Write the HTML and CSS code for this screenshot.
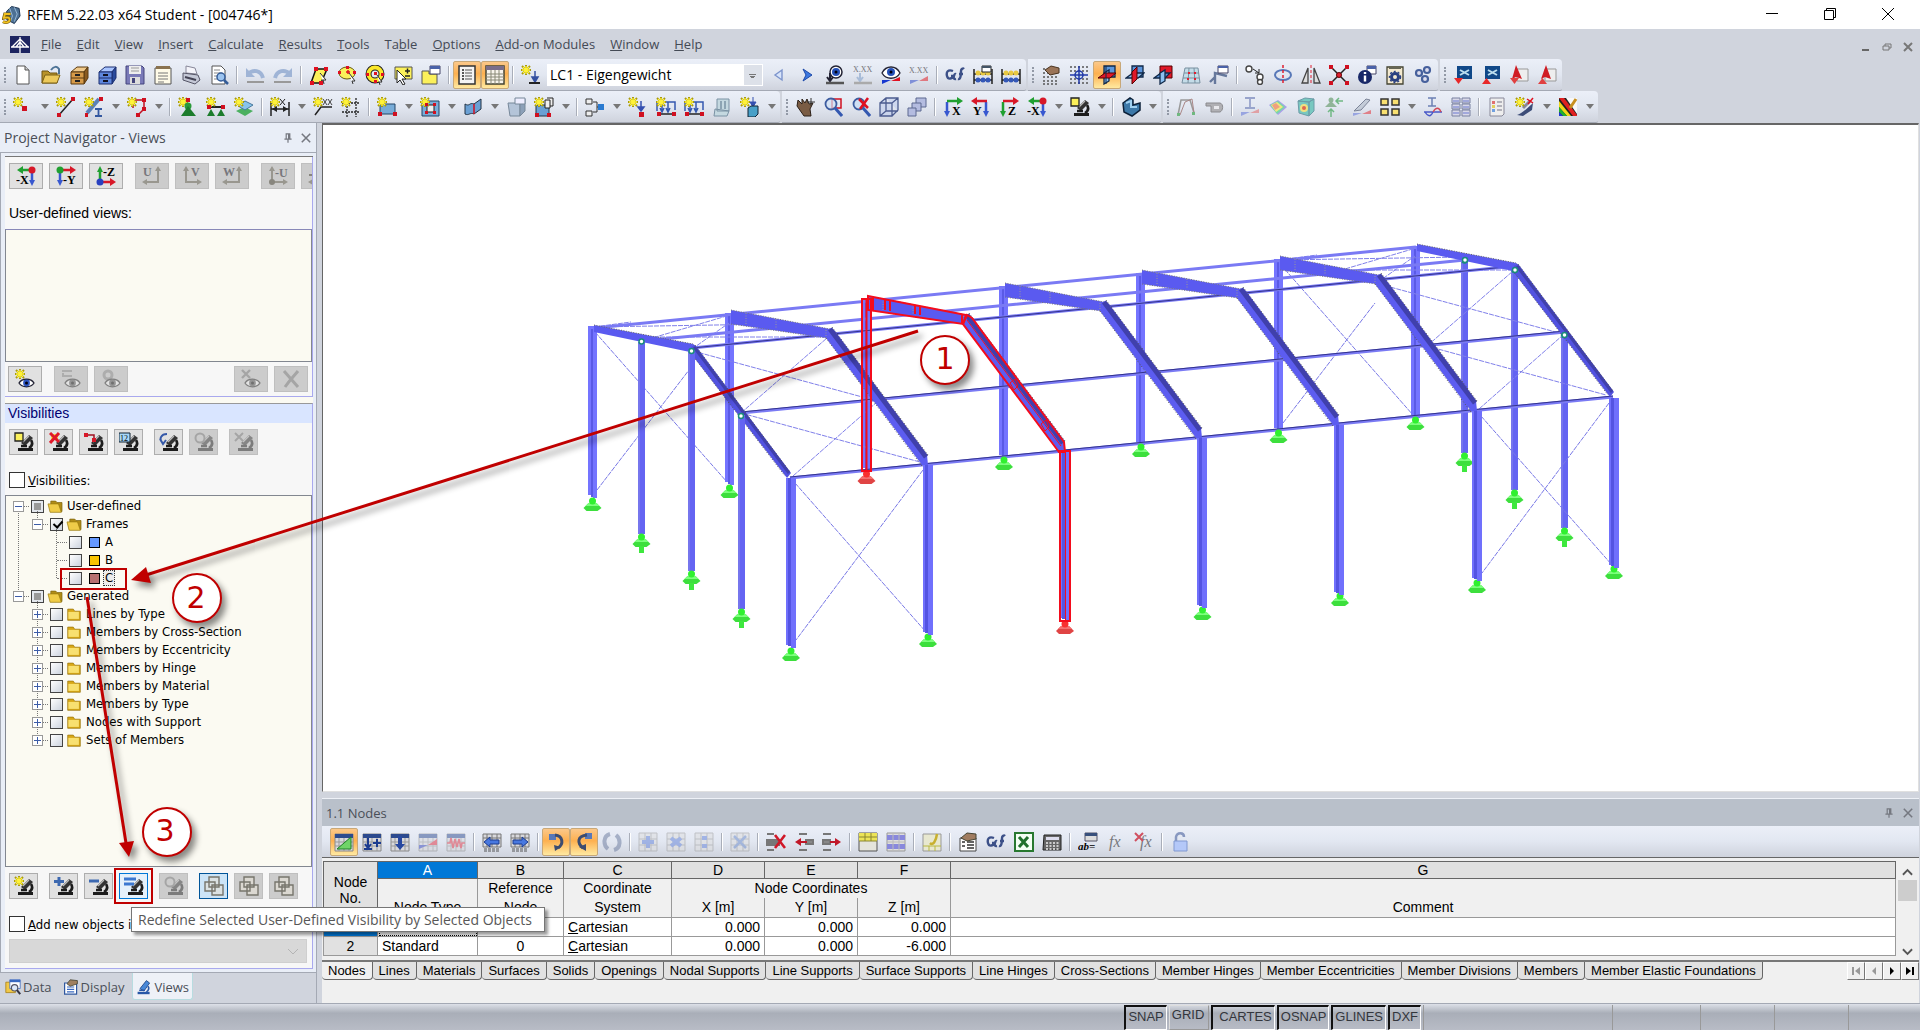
FILE: index.html
```html
<!DOCTYPE html>
<html lang="en">
<head>
    <meta charset="UTF-8">
    <meta name="viewport" content="width=device-width, initial-scale=1.0">
    <title>RFEM 5.22.03 x64 Student - [004746*]</title>
    <link rel="stylesheet" href="styles.css">
</head>
<body>
    <!-- Icon library -->
    <svg class="sprite" aria-hidden="true">
        <!-- shared pieces -->
        <symbol id="star" viewBox="0 0 20 20"><path d="M5 0v10M0 5h10M1 1l8 8M9 1l-8 8" stroke="#a89a10" stroke-width="2"/><path d="M5 1v8M1 5h8M2 2l6 6M8 2l-6 6" stroke="#fff23a" stroke-width="1.4"/></symbol>
        <symbol id="scope" viewBox="0 0 20 20"><path d="M4 16h15v3H4z" fill="#1c1c1c"/><path d="M7 11l8-8 4 3-8 8z" fill="#333"/><path d="M9 10l6-6" stroke="#bbb" stroke-width="1.2"/><path d="M17 8c2 3 1 6-2 8M7 14h6" stroke="#1c1c1c" stroke-width="2.6" fill="none"/></symbol>
        <symbol id="eye" viewBox="0 0 20 20"><path d="M4 14c3-5 12-5 15 0-3 5-12 5-15 0z" fill="#fff" stroke="#223" stroke-width="1.3"/><circle cx="11.500" cy="14" r="3.400" fill="#2d55c0"/><circle cx="11.500" cy="14" r="1.500" fill="#001"/></symbol>
        <symbol id="grid" viewBox="0 0 20 20"><path d="M1 2h18v17H1z" fill="#d8d8dc" stroke="#888"/><path d="M1 2h18v4H1z" fill="#2c4a8e"/><path d="M1 10h18M1 14h18M5 6v13M10 6v13M15 6v13" stroke="#999"/></symbol>
        <!-- standard toolbar -->
        <symbol id="new" viewBox="0 0 20 20"><path d="M4 1h8l4 4v14H4z" fill="#fff" stroke="#555"/><path d="M12 1v4h4" fill="#ccc" stroke="#555"/></symbol>
        <symbol id="open" viewBox="0 0 20 20"><path d="M1 6h6l2 2h7v10H1z" fill="#b8932a" stroke="#6f5510"/><path d="M1 18l3-8h15l-3 8z" fill="#ecc95a" stroke="#7b6015"/><path d="M10 5c3-4 6-4 8-1v5" fill="none" stroke="#4d7396" stroke-width="2"/></symbol>
        <symbol id="cab" viewBox="0 0 20 20"><path d="M2 7l6-5h11l-4 5z" fill="#f0c98a" stroke="#5a3a10"/><path d="M15 7l4-5v11l-4 6z" fill="#8a5a20" stroke="#5a3a10"/><path d="M2 7h13v12H2zM2 13h13" fill="#d69a48" stroke="#5a3a10"/><path d="M6 10h5M6 16h5" stroke="#222" stroke-width="2"/></symbol>
        <symbol id="cabblue" viewBox="0 0 20 20"><path d="M2 7l6-5h11l-4 5z" fill="#a8c4ff" stroke="#1c2f70"/><path d="M15 7l4-5v11l-4 6z" fill="#2a4a9c" stroke="#1c2f70"/><path d="M2 7h13v12H2zM2 13h13" fill="#5e86dc" stroke="#1c2f70"/><path d="M6 10h5M6 16h5" stroke="#112" stroke-width="2"/></symbol>
        <symbol id="save" viewBox="0 0 20 20"><path d="M1 1h16l2 2v16H1z" fill="#7a7ab8" stroke="#44447c"/><path d="M4 1h12v8H4z" fill="#eee"/><path d="M6 3h8M6 6h8" stroke="#999"/><path d="M5 12h10v7H5z" fill="#ddd"/><path d="M7 13h3v5H7z" fill="#44447c"/></symbol>
        <symbol id="clip" viewBox="0 0 20 20"><path d="M2 3h16v16H2z" fill="#fffbe8" stroke="#555"/><path d="M3 1h14v3H3z" fill="#8a7350"/><path d="M5 8h10M5 11h10M5 14h10M5 17h6" stroke="#777"/></symbol>
        <symbol id="print" viewBox="0 0 20 20"><path d="M5 1l9 2 2 6-11-1z" fill="#f4f4fa" stroke="#889"/><path d="M2 8l15 2 2 5-5 4-12-4z" fill="#c4c8d6" stroke="#556"/><path d="M4 12l11 3" stroke="#445" stroke-width="2"/></symbol>
        <symbol id="preview" viewBox="0 0 20 20"><path d="M3 1h9l4 4v14H3z" fill="#fff" stroke="#555"/><path d="M5 5h6M5 8h8M5 11h5M5 14h4" stroke="#888"/><circle cx="12" cy="12" r="4" fill="#9cc4f0" stroke="#345c98" stroke-width="1.500"/><path d="M15 15l4 4" stroke="#345c98" stroke-width="2.500"/></symbol>
        <symbol id="undo" viewBox="0 0 20 20"><path d="M3 9c5-5 13-4 15 4" fill="none" stroke="#9fb4d6" stroke-width="4"/><path d="M1 3v9h9z" fill="#9fb4d6"/><path d="M2 17h17" stroke="#999" stroke-width="2"/></symbol>
        <symbol id="redo" viewBox="0 0 20 20"><path d="M17 9c-5-5-13-4-15 4" fill="none" stroke="#9fb4d6" stroke-width="4"/><path d="M19 3v9h-9z" fill="#9fb4d6"/><path d="M1 17h17" stroke="#999" stroke-width="2"/></symbol>
        <symbol id="selpar" viewBox="0 0 20 20"><path d="M2 18L7 4h11l-6 14z" fill="#fbf05a" stroke="#111" stroke-width="1.500"/><path d="M1 16h4v4H1zM5 2h4v4H5zM15 2h4v4h-4zM10 16h4v4h-4z" fill="#e01020"/><path d="M11 8l6 7-3 0 1 4" fill="#fff" stroke="#333"/></symbol>
        <symbol id="selell" viewBox="0 0 20 20"><ellipse cx="10" cy="8" rx="8" ry="6" fill="#fbf05a" stroke="#665c10"/><path d="M1 6h3v3H1zM16 6h3v3h-3zM9 1h3v3H9z" fill="#e01020"/><path d="M9 7h4M11 5v4" stroke="#e01020" stroke-width="1.500"/><path d="M12 8l6 8h-3l1 3" fill="#fff" stroke="#333"/></symbol>
        <symbol id="selring" viewBox="0 0 20 20"><circle cx="10" cy="9" r="6.500" fill="none" stroke="#222" stroke-width="6"/><circle cx="10" cy="9" r="6.500" fill="none" stroke="#fbe72a" stroke-width="4"/><path d="M1 8h3v3H1zM16 8h3v3h-3zM9 15h3v3H9zM9 7h3v3H9z" fill="#e01020"/><path d="M12 10l5 7h-3l1 3" fill="#fff" stroke="#333"/></symbol>
        <symbol id="selplus" viewBox="0 0 20 20"><path d="M2 2h17v12H2z" fill="#fbf05a" stroke="#555"/><path d="M12 6h5M14.500 3.500v5M12 11h5" stroke="#222" stroke-width="1.500"/><path d="M4 5v13l3-3 3 5 2-1-3-5h4z" fill="#fff" stroke="#222"/></symbol>
        <symbol id="selwin" viewBox="0 0 20 20"><path d="M1 6h7v3h8v10H1z" fill="#fbf05a" stroke="#555"/><path d="M9 1h10v8H9z" fill="#fff" stroke="#446"/><path d="M9 1h10v3H9z" fill="#4a62a8"/></symbol>
        <symbol id="navi" viewBox="0 0 20 20"><path d="M2 1h16v18H2z" fill="#f4f4f4" stroke="#333" stroke-width="1.500"/><path d="M5 5h2M5 8h2M5 11h2M5 14h2" stroke="#222" stroke-width="1.500"/><path d="M8 5h7M8 8h7M8 11h7M8 14h7" stroke="#555"/></symbol>
        <symbol id="tab" viewBox="0 0 20 20"><path d="M1 1h18v18H1z" fill="#f8f4ec" stroke="#443" stroke-width="1.500"/><path d="M1 1h18v4H1z" fill="#7a6e8a"/><path d="M1 9h18M1 12h18M1 15h18M6 5v14M10 5v14M14 5v14" stroke="#887"/></symbol>
        <symbol id="loadnew" viewBox="0 0 20 20"><use href="#star"/><path d="M14 6v9M11 12l3 5 3-5z" stroke="#3450a0" stroke-width="1.500" fill="#3450a0"/><path d="M8 18h11" stroke="#222" stroke-width="2"/></symbol>
        <symbol id="prev" viewBox="0 0 20 20"><path d="M13 5v10L6 10z" fill="#d8e4fa" stroke="#7c94cc" stroke-width="1.400"/></symbol>
        <symbol id="next" viewBox="0 0 20 20"><path d="M6 4l9 6-9 6 3-6z" fill="#3c78e0" stroke="#1c48a8"/></symbol>
        <symbol id="loadeye" viewBox="0 0 20 20"><circle cx="11" cy="7" r="6" fill="#fff" stroke="#223" stroke-width="1.500"/><circle cx="11" cy="7" r="4" fill="#2450b8"/><circle cx="11" cy="7" r="1.500" fill="#001"/><path d="M5 8v8M2 12l3 4 3-4" stroke="#223" stroke-width="2" fill="none"/><path d="M1 18h18" stroke="#555" stroke-width="2.500"/></symbol>
        <symbol id="loadxx" viewBox="0 0 20 20"><text x="0" y="7" class="tiny gray">X.XX</text><path d="M7 8v8M4 12l3 4 3-4" stroke="#a8bcd8" stroke-width="2" fill="none"/><path d="M1 18h18" stroke="#aaa" stroke-width="2.500"/></symbol>
        <symbol id="reseye" viewBox="0 0 20 20"><path d="M1 8c4-8 14-8 18 0-4 7-14 7-18 0z" fill="#fff" stroke="#223" stroke-width="1.300"/><circle cx="10" cy="7" r="4" fill="#2450b8"/><circle cx="10" cy="7" r="1.500" fill="#001"/><path d="M1 19v-4l9 0z" fill="#1838d0"/><path d="M19 12v4l-9 0z" fill="#e01020"/></symbol>
        <symbol id="resxx" viewBox="0 0 20 20"><text x="0" y="8" class="tiny gray">X.XX</text><path d="M1 19v-4l9 0z" fill="#8090d8"/><path d="M19 11v5l-9 0z" fill="#e07880"/></symbol>
        <symbol id="calc" viewBox="0 0 20 20"><path d="M8 6c-5-2-7 1-6 5s5 3 6 0H6M11 9c-2-1-4 6 0 5M13 14c3 1 3-6 3-8s2-3 3-2M14 9h4" fill="none" stroke="#3c5088" stroke-width="2.400"/></symbol>
        <symbol id="abacus" viewBox="0 0 20 20"><path d="M1 4v15M19 4v15M1 9h18M1 15h18" fill="none" stroke="#222" stroke-width="1.500"/><circle cx="5" cy="8" r="2.500" fill="#e8c840"/><circle cx="10" cy="8" r="2.500" fill="#e8c840"/><circle cx="15" cy="8" r="2.500" fill="#e8c840"/><circle cx="5" cy="15" r="2.500" fill="#3458b8"/><circle cx="10" cy="15" r="2.500" fill="#3458b8"/><circle cx="15" cy="15" r="2.500" fill="#3458b8"/></symbol>
        <symbol id="abacus2" viewBox="0 0 20 20"><use href="#abacus"/><path d="M9 1h9v6H9z" fill="#fff" stroke="#222"/><path d="M9 1h9v2H9z" fill="#456"/></symbol>
        <symbol id="handgrid" viewBox="0 0 20 20"><path d="M2 4h16M2 8h16M2 12h16M2 16h16M2 19h16" stroke="#555" stroke-dasharray="2 2" stroke-width="1.500"/><path d="M4 5l6-4 8 2v5l-9 2z" fill="#9a7458" stroke="#4a3420"/></symbol>
        <symbol id="snap" viewBox="0 0 20 20"><path d="M1 2h18M1 6h18M1 14h18M1 18h18" stroke="#555" stroke-dasharray="2 2" stroke-width="1.500"/><circle cx="10" cy="10" r="4" fill="#cde" stroke="#2038a8" stroke-width="1.500"/><path d="M10 1v18M1 10h18" stroke="#2038a8" stroke-width="1.500"/></symbol>
        <symbol id="wp1" viewBox="0 0 20 20"><path d="M7 1h11v11H7z" fill="#5c96dc" stroke="#102848" stroke-width="1.300"/><path d="M7 8l5-3v11l-5 3z" fill="#8cc0f0" stroke="#102848" stroke-width="1.300"/><path d="M1 13l7-5h11l-6 5z" fill="#e01828" stroke="#500"/><path d="M9 1v18" stroke="#102848"/></symbol>
        <symbol id="wp2" viewBox="0 0 20 20"><path d="M7 1h11v11H7z" fill="#5c96dc" stroke="#102848" stroke-width="1.300"/><path d="M1 13l7-5h11l-6 5z" fill="#8cc0f0" stroke="#102848" stroke-width="1.300"/><path d="M7 7l5-5v12l-5 5z" fill="#e01828" stroke="#500"/></symbol>
        <symbol id="wp3" viewBox="0 0 20 20"><path d="M7 1h12v12H7z" fill="#e01828" stroke="#500"/><path d="M1 13l7-5h9l-5 5z" fill="#5c96dc" stroke="#102848" stroke-width="1.300"/><path d="M7 8l5-3v11l-5 3z" fill="#8cc0f0" stroke="#102848" stroke-width="1.300"/></symbol>
        <symbol id="gridtilt" viewBox="0 0 20 20"><path d="M4 3h13l2 15H1zM3 8h15M2 13h16M8 3L7 18M13 3l1 15" fill="#c4dce8" stroke="#7890a0"/><path d="M7 7h2v2H7zM13 7h2v2h-2zM6 13h2v2H6zM13 13h2v2h-2z" fill="#e02030"/></symbol>
        <symbol id="origin" viewBox="0 0 20 20"><path d="M6 19V8l12 3M6 12l-5 5" stroke="#66789c" stroke-width="2.400" fill="none"/><path d="M9 1h10v7H9z" fill="#fff" stroke="#446"/><path d="M9 1h10v2H9z" fill="#4a62a8"/></symbol>
        <symbol id="move" viewBox="0 0 20 20"><g fill="#fff" stroke="#444" stroke-width="1.400"><circle cx="4" cy="4" r="3"/><circle cx="15" cy="12" r="3"/><circle cx="15" cy="17" r="2.500"/></g><path d="M8 4l6 4M14 4v4h-4" stroke="#222" fill="none"/></symbol>
        <symbol id="rotate" viewBox="0 0 20 20"><ellipse cx="10" cy="10" rx="8" ry="5" fill="none" stroke="#5878b8" stroke-width="2"/><path d="M10 0v20" stroke="#e02030" stroke-dasharray="3 2" stroke-width="1.500"/></symbol>
        <symbol id="mirror" viewBox="0 0 20 20"><path d="M7 3v15H1zM13 3v15h6z" fill="#ddd" stroke="#444" stroke-width="1.300"/><path d="M10 0v20" stroke="#e02030" stroke-dasharray="3 2"/></symbol>
        <symbol id="cross" viewBox="0 0 20 20"><path d="M2 2l16 16M18 2L2 18" stroke="#222" stroke-width="1.500"/><path d="M0 0h4v4H0zM16 0h4v4h-4zM0 16h4v4H0zM16 16h4v4h-4z" fill="#d01020"/><circle cx="10" cy="10" r="2.500" fill="#e02030" stroke="#600"/></symbol>
        <symbol id="info" viewBox="0 0 20 20"><path d="M10 1h9v8h-9z" fill="#fff" stroke="#446"/><path d="M10 1h9v3h-9z" fill="#4a62a8"/><circle cx="8" cy="12" r="7" fill="#182868"/><path d="M8 7v2M8 10.500v6" stroke="#fff" stroke-width="2.400"/></symbol>
        <symbol id="pageset" viewBox="0 0 20 20"><path d="M2 2h16v17H2z" fill="#f4ead0" stroke="#443" stroke-width="1.300"/><path d="M4 1h12v3H4z" fill="#665"/><circle cx="10" cy="12" r="3.500" fill="none" stroke="#2a4080" stroke-width="3"/><circle cx="10" cy="12" r="5.500" fill="none" stroke="#2a4080" stroke-width="1.500" stroke-dasharray="2 2"/></symbol>
        <symbol id="gears" viewBox="0 0 20 20"><g fill="#dde" stroke="#46609c" stroke-width="2.200"><circle cx="6" cy="8" r="3"/><circle cx="14" cy="5" r="3"/><circle cx="12" cy="14" r="3"/></g></symbol>
        <symbol id="impblue" viewBox="0 0 20 20"><path d="M4 1h15v13H4z" fill="#104888"/><path d="M7 5l9 5M16 5l-9 5" stroke="#bde" stroke-width="2"/><path d="M1 13h9l-4.500 6z" fill="#e82828"/></symbol>
        <symbol id="expblue" viewBox="0 0 20 20"><path d="M4 1h15v13H4z" fill="#104888"/><path d="M7 5l9 5M16 5l-9 5" stroke="#bde" stroke-width="2"/><path d="M1 19h9l-4.500-6z" fill="#e82828"/></symbol>
        <symbol id="impred" viewBox="0 0 20 20"><path d="M8 4h11v12H8z" fill="#eee" stroke="#999"/><path d="M7 0l6 14-6-2-4 2z" fill="#d01c24"/><path d="M1 13h9l-4.500 6z" fill="#e04040"/></symbol>
        <symbol id="expred" viewBox="0 0 20 20"><path d="M8 4h11v12H8z" fill="#eee" stroke="#999"/><path d="M9 0l5 14-6-2-4 2z" fill="#d01c24"/><path d="M1 19h9l-4.500-6z" fill="#e04040"/></symbol>
        <!-- modelling toolbar -->
        <symbol id="node" viewBox="0 0 20 20"><use href="#star"/><path d="M9 9h5v5H9z" fill="#d01020"/></symbol>
        <symbol id="line" viewBox="0 0 20 20"><use href="#star"/><path d="M3 18L17 2" stroke="#222" stroke-width="1.500"/><path d="M1 16h4v4H1zM15 0h4v4h-4z" fill="#d01020"/></symbol>
        <symbol id="member" viewBox="0 0 20 20"><path d="M3 16L15 2" stroke="#5a80b8" stroke-width="4"/><use href="#star"/><path d="M1 16h3v4H1zM15 0h4v4h-4z" fill="#d01020"/><path d="M11 12h7M11 19h7M14.500 12v7" stroke="#3458a0" stroke-width="1.800"/></symbol>
        <symbol id="poly" viewBox="0 0 20 20"><path d="M6 11V3h11v9l-6 6" stroke="#c01020" fill="none" stroke-width="1.500"/><use href="#star"/><path d="M15 1h4v4h-4zM15 10h4v4h-4zM9 16h4v4H9z" fill="#d01020"/></symbol>
        <symbol id="support" viewBox="0 0 20 20"><use href="#star"/><path d="M8 1h4v4H8z" fill="#d01020"/><circle cx="10" cy="9" r="3.500" fill="#2a9a3a"/><path d="M10 9l8 10H3z" fill="#1c7c2c"/></symbol>
        <symbol id="linesup" viewBox="0 0 20 20"><path d="M2 10h16" stroke="#222" stroke-width="2"/><use href="#star"/><path d="M1 8h4v4H1zM15 8h4v4h-4z" fill="#d01020"/><path d="M5 12l4 7H1zM15 12l4 7h-8z" fill="#1c7c2c"/></symbol>
        <symbol id="surfsup" viewBox="0 0 20 20"><path d="M2 14l8-4 9 4-8 5z" fill="#4cb060"/><path d="M4 9l7-5 8 4-8 5z" fill="#88c4ec" stroke="#48789c"/><use href="#star"/></symbol>
        <symbol id="dim" viewBox="0 0 20 20"><path d="M1 5v14M19 5v14M1 12h18" stroke="#222" stroke-width="1.500"/><path d="M2 12l5-3v6zM18 12l-5-3v6z" fill="#222"/><use href="#star"/><path d="M10 2l5 6M15 2l-5 6" stroke="#222"/></symbol>
        <symbol id="dimxx" viewBox="0 0 20 20"><path d="M2 18l6-8h11" fill="none" stroke="#222" stroke-width="1.500"/><use href="#star"/><path d="M10 2l4 6M14 2l-4 6M15 2l4 6M19 2l-4 6" stroke="#444"/></symbol>
        <symbol id="guide" viewBox="0 0 20 20"><path d="M6 3v17M15 1v19M1 6h18M1 15h18" stroke="#222" stroke-dasharray="2 1" stroke-width="1.300"/><use href="#star"/></symbol>
        <symbol id="surf" viewBox="0 0 20 20"><path d="M3 7h15v10H3z" fill="#78acd8" stroke="#246"/><use href="#star"/><path d="M1 15h4v4H1zM16 15h4v4h-4z" fill="#d01020"/></symbol>
        <symbol id="opening" viewBox="0 0 20 20"><path d="M2 4h17v15H2z" fill="#78acd8" stroke="#246"/><path d="M7 8h7v7H7z" fill="#eee" stroke="#222"/><use href="#star"/><path d="M5 6h3v3H5zM13 6h3v3h-3zM5 14h3v3H5zM13 14h3v3h-3z" fill="#d01020"/></symbol>
        <symbol id="curved" viewBox="0 0 20 20"><path d="M2 7c5 3 4-2 9 0l7-5v10l-7 5c-4-2-5 2-9 0z" fill="#6aa0d4" stroke="#234"/><path d="M11 7v10" stroke="#d01020" stroke-width="1.500"/></symbol>
        <symbol id="solid" viewBox="0 0 20 20"><path d="M2 6h12v13H4z" fill="#b4c4d8" stroke="#789"/><path d="M14 6l5-4v12l-5 5z" fill="#8ca0b8" stroke="#789"/><path d="M9 1h10v6H9z" fill="#eef" stroke="#789"/></symbol>
        <symbol id="solid2" viewBox="0 0 20 20"><path d="M2 8h13v11H2z" fill="#6aa0d4" stroke="#234"/><path d="M11 3h5v8h-5zM13 1h6v8h-3" fill="#eee" stroke="#222"/><use href="#star"/><path d="M1 16h4v4H1zM13 16h4v4h-4z" fill="#d01020"/></symbol>
        <symbol id="hinge" viewBox="0 0 20 20"><path d="M1 2h6v5H1zM1 14h6v5H1z" fill="#eee" stroke="#333"/><path d="M8 5h4v10H8M12 10h3" stroke="#333" fill="none"/><path d="M13 7h6v6h-6z" fill="#2a7ad0"/></symbol>
        <symbol id="nload" viewBox="0 0 20 20"><use href="#star"/><path d="M13 4v8M10 10l3 4 3-4z" stroke="#3450b0" fill="#3450b0" stroke-width="1.500"/><path d="M11 15h5v5h-5z" fill="#d01020"/></symbol>
        <symbol id="mload" viewBox="0 0 20 20"><path d="M1 5h18v8M6 5v9M12 5v9M1 5v9M4 11l2 4 2-4M10 11l2 4 2-4" stroke="#3458b0" fill="none" stroke-width="1.500"/><path d="M1 17h18" stroke="#222" stroke-width="1.500"/><use href="#star"/><path d="M1 15h4v4H1zM16 15h4v4h-4z" fill="#d01020"/></symbol>
        <symbol id="sload" viewBox="0 0 20 20"><path d="M5 2h12v12H5zM3 12l14 2-2 5H2z" fill="#c4d8e0" stroke="#7a92a4"/><path d="M9 4v8M13 4v8" stroke="#7a92a4" stroke-width="1.500"/></symbol>
        <symbol id="vload" viewBox="0 0 20 20"><use href="#star"/><path d="M13 0v7M10 5l3 5 3-5z" stroke="#3450b0" fill="#3450b0"/><path d="M8 11l3-2h7v8l-3 3H8z" fill="#48a0c8" stroke="#123"/></symbol>
        <!-- view toolbar -->
        <symbol id="pan" viewBox="0 0 20 20"><path d="M3 3l4 4V2l3 4 2-4 2 5 4-1-3 6 1 7H9L2 9z" fill="#7a5c44" stroke="#2c2018"/><path d="M16 1v8M12 5h8" stroke="#333"/></symbol>
        <symbol id="zoomwin" viewBox="0 0 20 20"><path d="M9 2h9v9H9z" fill="none" stroke="#d01020" stroke-width="1.500"/><circle cx="8" cy="7" r="5.500" fill="#cfe0f4" fill-opacity=".7" stroke="#3c5ca0" stroke-width="1.800"/><path d="M12 11l7 8" stroke="#3458b0" stroke-width="3"/></symbol>
        <symbol id="zoomoff" viewBox="0 0 20 20"><circle cx="8" cy="7" r="5.500" fill="#cfe0f4" stroke="#3c5ca0" stroke-width="1.800"/><path d="M12 11l7 8" stroke="#3458b0" stroke-width="3"/><path d="M8 2l9 9M17 1L9 12" stroke="#e01020" stroke-width="2.500"/></symbol>
        <symbol id="cube" viewBox="0 0 20 20"><path d="M1 6h12v13H1zM1 6l6-5h12v12l-6 6M13 6l6-5M7 1v13h12M7 14l-6 5" fill="#c4d0ec" fill-opacity=".7" stroke="#4c5c90" stroke-width="1.300"/></symbol>
        <symbol id="cubes" viewBox="0 0 20 20"><g fill="#b4bce0" stroke="#5c6890"><path d="M9 1h10v9H9z"/><path d="M5 6h9v8H5z"/><path d="M1 11h8v8H1z"/></g></symbol>
        <symbol id="vx" viewBox="0 0 20 20"><path d="M4 5v11" stroke="#3858d0" stroke-width="2.500"/><path d="M1 14h6l-3 6z" fill="#3858d0"/><path d="M4 4h12" stroke="#20a030" stroke-width="2.500"/><path d="M14 0v8l6-4z" fill="#20a030"/><text x="9" y="18" class="axis">X</text></symbol>
        <symbol id="vy" viewBox="0 0 20 20"><path d="M15 5v11" stroke="#3858d0" stroke-width="2.500"/><path d="M12 14h6l-3 6z" fill="#3858d0"/><path d="M4 4h12" stroke="#d81828" stroke-width="2.500"/><path d="M6 0v8L0 4z" fill="#d81828"/><text x="2" y="18" class="axis">Y</text></symbol>
        <symbol id="vz" viewBox="0 0 20 20"><path d="M4 5v11" stroke="#20a030" stroke-width="2.500"/><path d="M1 14h6l-3 6z" fill="#20a030"/><path d="M4 4h12" stroke="#d81828" stroke-width="2.500"/><path d="M14 0v8l6-4z" fill="#d81828"/><text x="9" y="18" class="axis">Z</text></symbol>
        <symbol id="vnx" viewBox="0 0 20 20"><path d="M16 5v11" stroke="#3858d0" stroke-width="2.500"/><path d="M13 14h6l-3 6z" fill="#3858d0"/><path d="M5 4h11" stroke="#20a030" stroke-width="2.500"/><path d="M7 0v8L1 4z" fill="#20a030"/><circle cx="16" cy="4" r="3.500" fill="#d81828"/><text x="0" y="18" class="axis">-X</text></symbol>
        <symbol id="vny" viewBox="0 0 20 20"><path d="M4 5v11" stroke="#3858d0" stroke-width="2.500"/><path d="M1 14h6l-3 6z" fill="#3858d0"/><path d="M4 4h11" stroke="#d81828" stroke-width="2.500"/><path d="M14 0v8l6-4z" fill="#d81828"/><circle cx="4" cy="4" r="3.500" fill="#20a030"/><text x="7" y="18" class="axis">-Y</text></symbol>
        <symbol id="vnz" viewBox="0 0 20 20"><path d="M4 15V5" stroke="#20a030" stroke-width="2.500"/><path d="M1 6h6L4 0z" fill="#20a030"/><path d="M4 16h11" stroke="#d81828" stroke-width="2.500"/><path d="M14 12v8l6-4z" fill="#d81828"/><circle cx="4" cy="16" r="3.500" fill="#2840c0"/><text x="7" y="10" class="axis">-Z</text></symbol>
        <symbol id="vu" viewBox="0 0 20 20"><path d="M16 4v12H4" fill="none" stroke="#99978f" stroke-width="2"/><path d="M13 5h6l-3-5zM5 13v6l-5-3z" fill="#99978f"/><text x="1" y="10" class="axis gray">U</text></symbol>
        <symbol id="vv" viewBox="0 0 20 20"><path d="M4 4v12h12" fill="none" stroke="#99978f" stroke-width="2"/><path d="M1 5h6L4 0zM15 13v6l5-3z" fill="#99978f"/><text x="9" y="10" class="axis gray">V</text></symbol>
        <symbol id="vw" viewBox="0 0 20 20"><path d="M17 4v12H4" fill="none" stroke="#99978f" stroke-width="2"/><path d="M14 5h6l-3-5zM5 13v6l-5-3z" fill="#99978f"/><text x="1" y="10" class="axis gray">W</text></symbol>
        <symbol id="vnu" viewBox="0 0 20 20"><path d="M4 4v12h12" fill="none" stroke="#99978f" stroke-width="2"/><path d="M1 5h6L4 0zM15 13v6l5-3z" fill="#99978f"/><circle cx="4" cy="16" r="3" fill="#88867e"/><text x="7" y="11" class="axis gray">-U</text></symbol>
        <symbol id="vnv" viewBox="0 0 20 20"><path d="M1 9h5" stroke="#88867e" stroke-width="2"/><path d="M16 4v12H4" fill="none" stroke="#99978f" stroke-width="2"/><path d="M5 13v6l-5-3z" fill="#99978f"/></symbol>
        <symbol id="visbox" viewBox="0 0 20 20"><use href="#scope"/><path d="M1 1h8v8H1z" fill="#fbf05a" stroke="#222" stroke-width="1.300"/></symbol>
        <symbol id="render" viewBox="0 0 20 20"><path d="M2 6l7-5 3 2v5l7-2v7l-8 6-8-4z" fill="#3c78a8" stroke="#0c2038" stroke-width="1.500"/><path d="M5 6l5-2v6l6 0" stroke="#a0d0f0" fill="none" stroke-width="2"/></symbol>
        <!-- results toolbar -->
        <symbol id="deform" viewBox="0 0 20 20"><path d="M2 18L5 3l9 0 4 13" fill="none" stroke="#999" stroke-width="1.500"/><path d="M4 18L9 5l7-3 2 14" fill="none" stroke="#a88"/><path d="M1 16h3v3H1zM16 15h3v3h-3z" fill="#70b880"/></symbol>
        <symbol id="cam" viewBox="0 0 20 20"><path d="M2 6h14c4 1 3 8 0 9H7V9H2z" fill="#b0b0b4" stroke="#8a8a8e"/><path d="M10 9h5v3h-5z" fill="#e8e8ec"/></symbol>
        <symbol id="isec" viewBox="0 0 20 20"><path d="M5 1h10M5 11h10M10 1v10" stroke="#98a4cc" stroke-width="1.800"/><path d="M1 19v-4h9z" fill="#98a4e0"/><path d="M19 12v4h-9z" fill="#e0a0a4"/></symbol>
        <symbol id="rainbow" viewBox="0 0 20 20"><path d="M1 8l9-5 9 7-9 8z" fill="#a8a0e8"/><path d="M2 8l8-4 7 6-8 7z" fill="#78d8a8"/><path d="M3 8l6-3 6 5-7 5z" fill="#f0e880"/><path d="M4 8l4-2 4 4-5 3z" fill="#f0a080"/></symbol>
        <symbol id="rcube" viewBox="0 0 20 20"><path d="M2 4l11 1v14L3 16zM13 5l5-3v12l-5 5zM2 4l7-3 9 1-5 3z" fill="#78c8c0" stroke="#6c9ca8"/><circle cx="8" cy="11" r="4" fill="#f0e080"/><circle cx="8" cy="11" r="2" fill="#e06850"/></symbol>
        <symbol id="rsup" viewBox="0 0 20 20"><circle cx="7" cy="3" r="2.500" fill="#90b498"/><path d="M7 4l6 6H1z" fill="#90b498"/><path d="M7 20v-7M4 15l3-3 3 3M12 4h7M15 1l-3 3 3 3" stroke="#70b884" fill="none" stroke-width="1.500"/></symbol>
        <symbol id="knife" viewBox="0 0 20 20"><path d="M2 14L14 2l4 1-9 10z" fill="#c4ccd8" stroke="#7c8498"/><path d="M1 19v-3h9z" fill="#98a4e0"/><path d="M19 13v4h-9z" fill="#e08088"/></symbol>
        <symbol id="blocks" viewBox="0 0 20 20"><g fill="#f8e070" stroke="#333" stroke-width="1.500"><path d="M1 2h7v6H1zM12 2h7v6h-7zM1 12h7v6H1zM12 12h7v6h-7z"/></g></symbol>
        <symbol id="diag" viewBox="0 0 20 20"><path d="M5 1h8M5 9h8M9 1v8" stroke="#6c80b4" stroke-width="1.500"/><path d="M1 15h18M2 15c3 5 6 5 8 0" stroke="#4858c8" fill="none" stroke-width="1.300"/><path d="M10 15c3-5 6-5 8 0" stroke="#d04858" fill="none" stroke-width="1.300"/></symbol>
        <symbol id="tiles" viewBox="0 0 20 20"><path d="M1 1h8v5H1zM11 1h8v5h-8zM1 7h8v5H1zM11 7h8v5h-8zM1 13h8v6H1zM11 13h8v6h-8z" fill="#d8d8e8" stroke="#7880a0"/><path d="M2 4h6M12 4h6M2 10h6M12 10h6M2 16h6M12 16h6" stroke="#6a78d0"/></symbol>
        <symbol id="legend" viewBox="0 0 20 20"><path d="M3 1h14v16l-2 2H3z" fill="#eee" stroke="#889"/><path d="M5 4h3v3H5z" fill="#e07070"/><path d="M5 8h3v3H5z" fill="#e0d060"/><path d="M5 12h3v3H5z" fill="#70a0e0"/><path d="M10 5h5M10 9h5M10 13h5" stroke="#778"/></symbol>
        <symbol id="section" viewBox="0 0 20 20"><path d="M2 18c4-1 12-8 16-12l-1 7-9 6z" fill="#3c4c78"/><path d="M8 11l7-7" stroke="#889" stroke-width="3"/><path d="M12 2l6 4M18 1l-5 6" stroke="#e01020" stroke-width="1.500"/><use href="#star"/></symbol>
        <symbol id="palette" viewBox="0 0 20 20"><path d="M1 1h18v18H1z" fill="#222"/><path d="M1 1h5l13 17v1h-4z" fill="#e02020"/><path d="M1 4l12 15H9L1 10z" fill="#f0d818"/><path d="M1 10l8 9H5l-4-4z" fill="#20b030"/><path d="M1 15l4 4H1z" fill="#2038d0"/><path d="M8 1h11v16z" fill="#f8f8f8"/><path d="M12 11l6-9" stroke="#c89020" stroke-width="3"/></symbol>
        <!-- navigator -->
        <symbol id="eyenew" viewBox="0 0 20 20"><use href="#star"/><use href="#eye"/></symbol>
        <symbol id="eyeeq" viewBox="0 0 20 20"><path d="M1 2h10M1 7h10M2 4v3" stroke="#888" stroke-width="2"/><use href="#eye"/></symbol>
        <symbol id="eyeref" viewBox="0 0 20 20"><circle cx="7" cy="6" r="4" fill="none" stroke="#888" stroke-width="3"/><use href="#eye"/></symbol>
        <symbol id="eyedel" viewBox="0 0 20 20"><path d="M1 1l8 8M9 1L1 9" stroke="#777" stroke-width="2.400"/><use href="#eye"/></symbol>
        <symbol id="del" viewBox="0 0 20 20"><path d="M3 2l14 16M17 2c-4 5-8 9-13 16" stroke="#777" stroke-width="3" fill="none"/></symbol>
        <symbol id="sdel" viewBox="0 0 20 20"><use href="#scope"/><path d="M2 2h7v6H2z" fill="#f8e040"/><path d="M1 1l9 9M10 1L1 11" stroke="#e01828" stroke-width="3"/></symbol>
        <symbol id="sline" viewBox="0 0 20 20"><use href="#scope"/><path d="M2 3h8v5" fill="none" stroke="#a01020" stroke-width="1.500"/><path d="M0 1h4v4H0zM8 6h4v4H8z" fill="#d81828"/></symbol>
        <symbol id="snum" viewBox="0 0 20 20"><use href="#scope"/><path d="M0 1h11v9H0z" fill="#a8d8f8" stroke="#123"/><text x="1" y="9" class="tiny">12</text></symbol>
        <symbol id="sundo" viewBox="0 0 20 20"><use href="#scope"/><path d="M8 2c-6 0-8 5-5 8M1 7l3 5 3-4" fill="none" stroke="#3458a8" stroke-width="2"/></symbol>
        <symbol id="sref" viewBox="0 0 20 20"><use href="#scope"/><circle cx="6" cy="6" r="4.500" fill="none" stroke="#777" stroke-width="2"/></symbol>
        <symbol id="sx" viewBox="0 0 20 20"><use href="#scope"/><path d="M1 1l8 8M9 1L1 9" stroke="#777" stroke-width="2"/></symbol>
        <symbol id="snew" viewBox="0 0 20 20"><use href="#scope"/><use href="#star"/></symbol>
        <symbol id="splus" viewBox="0 0 20 20"><use href="#scope"/><path d="M5 1v9M0 5.500h10" stroke="#3c68b0" stroke-width="3"/></symbol>
        <symbol id="sminus" viewBox="0 0 20 20"><use href="#scope"/><path d="M0 5h10" stroke="#3c68b0" stroke-width="3"/></symbol>
        <symbol id="seq" viewBox="0 0 20 20"><use href="#scope"/><path d="M0 3h12M0 8h10" stroke="#3c78d0" stroke-width="2.800"/></symbol>
        <symbol id="inter" viewBox="0 0 20 20"><path d="M5 1h10v10H5zM1 6h10v9H1zM8 9h11v10H8z" fill="#e4e0d4" fill-opacity=".6" stroke="#77756c" stroke-width="1.400"/></symbol>
        <symbol id="tdata" viewBox="0 0 20 20"><path d="M1 4h12v13H1z" fill="#f0c848" stroke="#a88018"/><path d="M6 1h13v11H6z" fill="#fff" stroke="#3868c0"/><path d="M6 1h13v3H6z" fill="#3868c0"/><circle cx="12" cy="11" r="4" fill="#dce8f8" stroke="#556" stroke-width="1.500"/><path d="M15 14l4 5" stroke="#334" stroke-width="2.500"/></symbol>
        <symbol id="tdisp" viewBox="0 0 20 20"><path d="M2 5h15v14H2z" fill="#fff" stroke="#3058a0" stroke-width="1.500"/><path d="M5 10h9M5 13h9M5 16h9" stroke="#3868c0" stroke-width="1.500"/><path d="M5 6l4-5 9 1v4l-9 3z" fill="#a08060" stroke="#443"/></symbol>
        <symbol id="tview" viewBox="0 0 20 20"><path d="M2 16h15v3H2z" fill="#2858a8"/><path d="M5 12L13 2l4 3-7 10z" fill="#4888d8" stroke="#1c4080"/><path d="M15 9c2 3 1 5-2 7M4 14h7" stroke="#2858a8" stroke-width="2" fill="none"/></symbol>
        <symbol id="folder" viewBox="0 0 20 20"><path d="M1 3h8l2 3h8v13H1z" fill="#d8a818" stroke="#98740c"/><path d="M2 7h15v10H2z" fill="#f8e070"/></symbol>
        <symbol id="folderopen" viewBox="0 0 20 20"><path d="M4 3h7l2 2h7v13H4z" fill="#b08c18" stroke="#7c6410"/><path d="M0 7h15l4 12H3z" fill="#f0cc48" stroke="#98780c"/></symbol>
        <symbol id="pin" viewBox="0 0 20 20"><path d="M6 3h8M7 3v9M13 3v9M11 3v9M4 12h12M10 12v6" stroke="currentColor" stroke-width="2"/></symbol>
        <symbol id="x" viewBox="0 0 20 20"><path d="M3 3l14 14M17 3L3 17" stroke="currentColor" stroke-width="2.600"/></symbol>
        <!-- table toolbar -->
        <symbol id="gtri" viewBox="0 0 20 20"><use href="#grid"/><path d="M3 17h14V5z" fill="#70d468" stroke="#208028"/></symbol>
        <symbol id="gplus" viewBox="0 0 20 20"><use href="#grid"/><path d="M6 6v9M3 12l3 4 3-4M2 17h8M15 7v8M11 11h8" stroke="#1c3c90" stroke-width="2" fill="none"/></symbol>
        <symbol id="gdown" viewBox="0 0 20 20"><use href="#grid"/><path d="M8 4h4v8h3l-5 6-5-6h3z" fill="#2848a0"/></symbol>
        <symbol id="gramp" viewBox="0 0 20 20"><use href="#grid"/><path d="M1 17v-4h9z" fill="#3848c0"/><path d="M19 7v6h-9z" fill="#e03040"/></symbol>
        <symbol id="gwave" viewBox="0 0 20 20"><use href="#grid"/><path d="M1 11h3l1-5 2 10 2-9 2 8 2-8 2 9 1-5h3" stroke="#e03040" fill="none" stroke-width="1.600"/></symbol>
        <symbol id="gleft" viewBox="0 0 20 20"><path d="M1 2h18v13H1zM1 6h18M5 2v13M10 2v13M15 2v13" fill="#d8d8dc" stroke="#777"/><path d="M2 17h16M2 19h16" stroke="#555" stroke-dasharray="3 1"/><path d="M2 10l6-5v3h9v4H8v3z" fill="#4878e0" stroke="#1c3c90"/></symbol>
        <symbol id="gright" viewBox="0 0 20 20"><path d="M1 2h18v13H1zM1 6h18M5 2v13M10 2v13M15 2v13" fill="#d8d8dc" stroke="#777"/><path d="M2 17h16M2 19h16" stroke="#555" stroke-dasharray="3 1"/><path d="M18 10l-6-5v3H3v4h9v3z" fill="#4878e0" stroke="#1c3c90"/></symbol>
        <symbol id="sync1" viewBox="0 0 20 20"><path d="M3 2h7v6H3z" fill="#5878b8"/><path d="M9 3c8 1 9 9 3 13" fill="none" stroke="#3c4c70" stroke-width="3"/><path d="M8 13l7 2-6 4z" fill="#3c4c70"/></symbol>
        <symbol id="sync2" viewBox="0 0 20 20"><path d="M11 1h7v6h-7z" fill="#5878b8"/><path d="M13 3C3 4 3 11 9 16" fill="none" stroke="#3c4c70" stroke-width="3"/><path d="M5 15l7-3v7z" fill="#3c4c70"/></symbol>
        <symbol id="refresh" viewBox="0 0 20 20"><path d="M8 2C1 4 1 13 6 17M12 18c7-2 7-11 2-15" fill="none" stroke="#68789c" stroke-width="4"/></symbol>
        <symbol id="cplus" viewBox="0 0 20 20"><path d="M1 1h18v18H1zM7 1v18M13 1v18M1 7h18M1 13h18" fill="#ddd" stroke="#999"/><path d="M10 4v12M4 10h12" stroke="#6080d8" stroke-width="4"/></symbol>
        <symbol id="cmul" viewBox="0 0 20 20"><path d="M1 1h18v18H1zM7 1v18M13 1v18M1 7h18M1 13h18" fill="#ddd" stroke="#999"/><path d="M5 6l10 8M15 6L5 14" stroke="#6080d8" stroke-width="4"/></symbol>
        <symbol id="cdiv" viewBox="0 0 20 20"><path d="M1 1h18v18H1zM7 1v18M13 1v18M1 7h18M1 13h18" fill="#ddd" stroke="#999"/><path d="M8 4h5v4H8zM8 12h5v4H8z" fill="#6080d8"/></symbol>
        <symbol id="cx" viewBox="0 0 20 20"><path d="M1 1h18v18H1zM7 1v18M13 1v18M1 7h18M1 13h18" fill="#ddd" stroke="#999"/><path d="M4 4l12 12M16 4L4 16" stroke="#6888c8" stroke-width="2.500"/></symbol>
        <symbol id="rdel" viewBox="0 0 20 20"><path d="M1 2h7M1 8h12v5H1zM1 18h7" fill="#777" stroke="#777" stroke-width="2"/><path d="M9 3l10 13M19 3L9 16" stroke="#d01828" stroke-width="2.600"/></symbol>
        <symbol id="rin" viewBox="0 0 20 20"><path d="M5 2h8M5 18h8M12 8h7v4h-7z" fill="#888" stroke="#777" stroke-width="2"/><path d="M1 10l6-4v3h6v2H7v3z" fill="#c01828"/></symbol>
        <symbol id="rout" viewBox="0 0 20 20"><path d="M1 2h8M1 18h8M1 8h7v4H1z" fill="#888" stroke="#777" stroke-width="2"/><path d="M19 10l-6-4v3H8v2h5v3z" fill="#c01828"/></symbol>
        <symbol id="tyel" viewBox="0 0 20 20"><path d="M1 1h18v18H1z" fill="#e4e4dc" stroke="#555"/><path d="M1 1h18v8H1z" fill="#ece458"/><path d="M1 5h18M1 9h18M7 1v8M13 1v8" stroke="#8a8630"/></symbol>
        <symbol id="tblue" viewBox="0 0 20 20"><path d="M1 1h18v18H1z" fill="#ddd" stroke="#999"/><path d="M1 3h18v5H1zM1 12h18v5H1z" fill="#8888dc"/><path d="M7 1v18M13 1v18M1 10h18" stroke="#bbb"/></symbol>
        <symbol id="tedit" viewBox="0 0 20 20"><path d="M1 2h18v17H1z" fill="#e8e8d0" stroke="#999"/><path d="M1 14h18M7 14v5M13 14v5" stroke="#b8b840"/><path d="M8 11c3 3 6-2 7-9" stroke="#c8b030" fill="none" stroke-width="2.500"/></symbol>
        <symbol id="tprop" viewBox="0 0 20 20"><path d="M2 6h16v13H2z" fill="#fff" stroke="#444"/><path d="M4 10h3M4 14h3M9 10h7M9 13h7M9 16h7" stroke="#333" stroke-width="1.400"/><path d="M3 6l6-5 9 1v5l-9 2z" fill="#a07c60" stroke="#443"/></symbol>
        <symbol id="excel" viewBox="0 0 20 20"><path d="M1 1h18v18H1z" fill="#f4fff4" stroke="#287830" stroke-width="2"/><path d="M5 5l9 10M14 5L5 15" stroke="#20702c" stroke-width="3"/></symbol>
        <symbol id="pocket" viewBox="0 0 20 20"><path d="M2 3h17v15H1z" fill="#666" stroke="#222"/><path d="M4 5h13v3H4z" fill="#dde"/><path d="M4 11h13M4 14h13M4 17h13" stroke="#eee" stroke-dasharray="2 1.500" stroke-width="1.500"/></symbol>
        <symbol id="abeq" viewBox="0 0 20 20"><path d="M7 1h12v8H7z" fill="#ddd" stroke="#556"/><path d="M7 1h12v3H7z" fill="#38507c"/><text x="0" y="18" class="formula small">ab=</text></symbol>
        <symbol id="fx" viewBox="0 0 20 20"><text x="3" y="15" class="formula gray">fx</text></symbol>
        <symbol id="fxdel" viewBox="0 0 20 20"><text x="6" y="15" class="formula gray">fx</text><path d="M1 1l8 8M9 1L1 9" stroke="#d05060" stroke-width="2"/></symbol>
        <symbol id="lock" viewBox="0 0 20 20"><path d="M6 9V5c1-5 8-5 8 0" fill="none" stroke="#8898c0" stroke-width="2.500"/><path d="M4 9h13v10H4z" fill="#b4c8f8" stroke="#8098d0"/></symbol>
    </svg>

    <!-- Title bar -->
    <header class="titlebar">
        <svg class="app-icon" viewBox="0 0 20 20"><path d="M5 6l5-5 8 2 1 8-6 8-8-4z" fill="#4c7094" stroke="#1c3450"/><path d="M8 3l3 8-2 6M13 2l3 7-3 8" stroke="#9cbcd8" fill="none"/><path d="M9 9H3l-1 4c5-1 6 0 6 2s-3 4-7 2" fill="none" stroke="#6c5408" stroke-width="3.400"/><path d="M9 9H3l-1 4c5-1 6 0 6 2s-3 4-7 2" fill="none" stroke="#f0c020" stroke-width="2"/></svg>
        <h1>RFEM 5.22.03 x64 Student - [004746*]</h1>
        <div class="window-buttons">
            <button aria-label="Minimize"><svg viewBox="0 0 12 12"><path d="M0 5.500h12" stroke="#000"/></svg></button>
            <button aria-label="Restore"><svg viewBox="0 0 12 12"><path d="M.500 2.500h9v9h-9zM2.500 2.500v-2h9v9h-2" fill="none" stroke="#000"/></svg></button>
            <button aria-label="Close"><svg viewBox="0 0 12 12"><path d="M0 0l12 12M12 0L0 12" stroke="#000"/></svg></button>
        </div>
    </header>

    <nav class="menubar">
        <svg class="doc-icon" viewBox="0 0 20 17"><path d="M0 0h20v17H0z" fill="#1c2460"/><path d="M10 1v16M1 11h18M10 3L2 11M10 3l8 8M10 6l-4 5M10 6l4 5" stroke="#fff" stroke-width="1.300"/></svg>
        <a href="#"><u>F</u>ile</a>
        <a href="#"><u>E</u>dit</a>
        <a href="#"><u>V</u>iew</a>
        <a href="#"><u>I</u>nsert</a>
        <a href="#"><u>C</u>alculate</a>
        <a href="#"><u>R</u>esults</a>
        <a href="#"><u>T</u>ools</a>
        <a href="#">Ta<u>b</u>le</a>
        <a href="#"><u>O</u>ptions</a>
        <a href="#"><u>A</u>dd-on Modules</a>
        <a href="#"><u>W</u>indow</a>
        <a href="#"><u>H</u>elp</a>
        <div class="mdi-buttons">
            <button aria-label="Minimize document"><svg viewBox="0 0 10 10"><path d="M1 8h7" stroke="#666" stroke-width="2"/></svg></button>
            <button aria-label="Restore document"><svg viewBox="0 0 10 10"><path d="M1 4h6v4H1zM3 4V2h6v4H7" fill="none" stroke="#777"/></svg></button>
            <button aria-label="Close document"><svg viewBox="0 0 10 10"><path d="M1 1l8 8M9 1L1 9" stroke="#777" stroke-width="2"/></svg></button>
        </div>
    </nav>

    <!-- Toolbars -->
    <div class="toolbar-row">
        <div class="toolbar">
            <button class="tool" aria-label="New"><svg><use href="#new"/></svg></button>
            <button class="tool" aria-label="Open"><svg><use href="#open"/></svg></button>
            <button class="tool" aria-label="Project manager"><svg><use href="#cab"/></svg></button>
            <button class="tool" aria-label="Block manager"><svg><use href="#cabblue"/></svg></button>
            <button class="tool" aria-label="Save"><svg><use href="#save"/></svg></button>
            <button class="tool" aria-label="General data"><svg><use href="#clip"/></svg></button>
            <button class="tool" aria-label="Print"><svg><use href="#print"/></svg></button>
            <button class="tool" aria-label="Print preview"><svg><use href="#preview"/></svg></button>
            <span class="sep"></span>
            <button class="tool" aria-label="Undo"><svg><use href="#undo"/></svg></button>
            <button class="tool" aria-label="Redo"><svg><use href="#redo"/></svg></button>
            <span class="sep"></span>
            <button class="tool" aria-label="Select by rhomboid"><svg><use href="#selpar"/></svg></button>
            <button class="tool" aria-label="Select by ellipse"><svg><use href="#selell"/></svg></button>
            <button class="tool" aria-label="Select by ring"><svg><use href="#selring"/></svg></button>
            <button class="tool" aria-label="Add to selection"><svg><use href="#selplus"/></svg></button>
            <button class="tool" aria-label="Special selection"><svg><use href="#selwin"/></svg></button>
            <span class="sep"></span>
            <button class="tool on" aria-label="Navigator"><svg><use href="#navi"/></svg></button>
            <button class="tool on" aria-label="Tables"><svg><use href="#tab"/></svg></button>
            <span class="sep"></span>
            <button class="tool" aria-label="New load case"><svg><use href="#loadnew"/></svg></button>
            <select class="load-case" aria-label="Load case"><option>LC1 - Eigengewicht</option></select>
            <button class="tool" aria-label="Previous load case"><svg><use href="#prev"/></svg></button>
            <button class="tool" aria-label="Next load case"><svg><use href="#next"/></svg></button>
            <button class="tool" aria-label="Show loads"><svg><use href="#loadeye"/></svg></button>
            <button class="tool" aria-label="Show load values"><svg><use href="#loadxx"/></svg></button>
            <button class="tool" aria-label="Show results"><svg><use href="#reseye"/></svg></button>
            <button class="tool" aria-label="Show result values"><svg><use href="#resxx"/></svg></button>
            <span class="sep"></span>
            <button class="tool" aria-label="Mesh settings"><svg><use href="#calc"/></svg></button>
            <button class="tool" aria-label="To calculate"><svg><use href="#abacus2"/></svg></button>
            <button class="tool" aria-label="Calculate all"><svg><use href="#abacus"/></svg></button>
        </div>
        <div class="toolbar">
            <button class="tool" aria-label="Work plane settings"><svg><use href="#handgrid"/></svg></button>
            <button class="tool" aria-label="Snap"><svg><use href="#snap"/></svg></button>
            <button class="tool on" aria-label="Plane XY"><svg><use href="#wp1"/></svg></button>
            <button class="tool" aria-label="Plane YZ"><svg><use href="#wp2"/></svg></button>
            <button class="tool" aria-label="Plane XZ"><svg><use href="#wp3"/></svg></button>
            <button class="tool" aria-label="Plane by points"><svg><use href="#gridtilt"/></svg></button>
            <button class="tool" aria-label="Coordinate system"><svg><use href="#origin"/></svg></button>
            <span class="sep"></span>
            <button class="tool" aria-label="Move or copy"><svg><use href="#move"/></svg></button>
            <button class="tool" aria-label="Rotate"><svg><use href="#rotate"/></svg></button>
            <button class="tool" aria-label="Mirror"><svg><use href="#mirror"/></svg></button>
            <button class="tool" aria-label="Connect"><svg><use href="#cross"/></svg></button>
            <button class="tool" aria-label="Info"><svg><use href="#info"/></svg></button>
            <button class="tool" aria-label="Display properties"><svg><use href="#pageset"/></svg></button>
            <button class="tool" aria-label="Program options"><svg><use href="#gears"/></svg></button>
        </div>
        <div class="toolbar">
            <button class="tool" aria-label="Import from Tekla"><svg><use href="#impblue"/></svg></button>
            <button class="tool" aria-label="Export to Tekla"><svg><use href="#expblue"/></svg></button>
            <button class="tool" aria-label="Import from CAD"><svg><use href="#impred"/></svg></button>
            <button class="tool" aria-label="Export to CAD"><svg><use href="#expred"/></svg></button>
        </div>
    </div>
    <div class="toolbar-row">
        <div class="toolbar">
            <button class="tool" aria-label="Node"><svg><use href="#node"/></svg></button><button class="drop" aria-label="More nodes"></button>
            <button class="tool" aria-label="Line"><svg><use href="#line"/></svg></button>
            <button class="tool" aria-label="Member"><svg><use href="#member"/></svg></button><button class="drop" aria-label="More members"></button>
            <button class="tool" aria-label="Polyline"><svg><use href="#poly"/></svg></button><button class="drop" aria-label="More lines"></button>
            <span class="sep"></span>
            <button class="tool" aria-label="Nodal support"><svg><use href="#support"/></svg></button>
            <button class="tool" aria-label="Line support"><svg><use href="#linesup"/></svg></button>
            <button class="tool" aria-label="Surface support"><svg><use href="#surfsup"/></svg></button>
            <span class="sep"></span>
            <button class="tool" aria-label="Dimension"><svg><use href="#dim"/></svg></button><button class="drop" aria-label="More dimensions"></button>
            <button class="tool" aria-label="Comment"><svg><use href="#dimxx"/></svg></button>
            <button class="tool" aria-label="Guideline"><svg><use href="#guide"/></svg></button>
            <span class="sep"></span>
            <button class="tool" aria-label="Surface"><svg><use href="#surf"/></svg></button><button class="drop" aria-label="More surfaces"></button>
            <button class="tool" aria-label="Opening"><svg><use href="#opening"/></svg></button><button class="drop" aria-label="More openings"></button>
            <button class="tool" aria-label="Curved surface"><svg><use href="#curved"/></svg></button><button class="drop" aria-label="More curved surfaces"></button>
            <button class="tool" aria-label="Solid"><svg><use href="#solid"/></svg></button>
            <button class="tool" aria-label="Extrude"><svg><use href="#solid2"/></svg></button><button class="drop" aria-label="More solids"></button>
            <span class="sep"></span>
            <button class="tool" aria-label="Hinge"><svg><use href="#hinge"/></svg></button><button class="drop" aria-label="More hinges"></button>
            <button class="tool" aria-label="Nodal load"><svg><use href="#nload"/></svg></button>
            <button class="tool" aria-label="Member load"><svg><use href="#mload"/></svg></button>
            <button class="tool" aria-label="Line load"><svg><use href="#mload"/></svg></button>
            <button class="tool" aria-label="Surface load"><svg><use href="#sload"/></svg></button>
            <button class="tool" aria-label="Solid load"><svg><use href="#vload"/></svg></button><button class="drop" aria-label="More loads"></button>
        </div>
        <div class="toolbar">
            <button class="tool" aria-label="Pan"><svg><use href="#pan"/></svg></button>
            <button class="tool" aria-label="Zoom window"><svg><use href="#zoomwin"/></svg></button>
            <button class="tool" aria-label="Show all"><svg><use href="#zoomoff"/></svg></button>
            <button class="tool" aria-label="Isometric"><svg><use href="#cube"/></svg></button>
            <button class="tool" aria-label="Perspective"><svg><use href="#cubes"/></svg></button>
            <span class="sep"></span>
            <button class="tool" aria-label="View in X"><svg><use href="#vx"/></svg></button>
            <button class="tool" aria-label="View in Y"><svg><use href="#vy"/></svg></button>
            <button class="tool" aria-label="View in Z"><svg><use href="#vz"/></svg></button>
            <button class="tool" aria-label="View in -X"><svg><use href="#vnx"/></svg></button><button class="drop" aria-label="More views"></button>
            <button class="tool" aria-label="Visibility"><svg><use href="#visbox"/></svg></button><button class="drop" aria-label="More visibilities"></button>
            <span class="sep"></span>
            <button class="tool" aria-label="Rendering"><svg><use href="#render"/></svg></button><button class="drop" aria-label="More rendering"></button>
        </div>
        <div class="toolbar">
            <button class="tool" aria-label="Deformation"><svg><use href="#deform"/></svg></button>
            <button class="tool" aria-label="Animation"><svg><use href="#cam"/></svg></button>
            <span class="sep"></span>
            <button class="tool" aria-label="Member results"><svg><use href="#isec"/></svg></button>
            <button class="tool" aria-label="Surface results"><svg><use href="#rainbow"/></svg></button>
            <button class="tool" aria-label="Solid results"><svg><use href="#rcube"/></svg></button>
            <button class="tool" aria-label="Support reactions"><svg><use href="#rsup"/></svg></button>
            <button class="tool" aria-label="Section results"><svg><use href="#knife"/></svg></button>
            <button class="tool" aria-label="Isobands"><svg><use href="#blocks"/></svg></button><button class="drop" aria-label="More isobands"></button>
            <button class="tool" aria-label="Result diagrams"><svg><use href="#diag"/></svg></button>
            <button class="tool" aria-label="Multiple windows"><svg><use href="#tiles"/></svg></button>
            <span class="sep"></span>
            <button class="tool" aria-label="Panel"><svg><use href="#legend"/></svg></button>
            <button class="tool" aria-label="New section"><svg><use href="#section"/></svg></button><button class="drop" aria-label="More sections"></button>
            <button class="tool" aria-label="Color scale"><svg><use href="#palette"/></svg></button><button class="drop" aria-label="More colors"></button>
        </div>
    </div>

    <main class="workspace">
        <!-- Project navigator -->
        <aside class="navigator">
            <div class="nav-title">
                <h2>Project Navigator - Views</h2>
                <button aria-label="Pin"><svg><use href="#pin"/></svg></button>
                <button aria-label="Close navigator"><svg><use href="#x"/></svg></button>
            </div>
            <div class="nav-frame">
                <div class="nav-body">
                    <section class="views">
                        <div class="btn-row view-row">
                            <button class="btn" aria-label="-X view"><svg><use href="#vnx"/></svg></button>
                            <button class="btn" aria-label="-Y view"><svg><use href="#vny"/></svg></button>
                            <button class="btn" aria-label="-Z view"><svg><use href="#vnz"/></svg></button>
                            <button class="btn off gap" aria-label="U view" disabled><svg><use href="#vu"/></svg></button>
                            <button class="btn off" aria-label="V view" disabled><svg><use href="#vv"/></svg></button>
                            <button class="btn off" aria-label="W view" disabled><svg><use href="#vw"/></svg></button>
                            <button class="btn off gap" aria-label="-U view" disabled><svg><use href="#vnu"/></svg></button>
                            <button class="btn off" aria-label="-V view" disabled><svg><use href="#vnv"/></svg></button>
                        </div>
                        <p class="views-label">User-defined views:</p>
                        <div class="views-list"></div>
                        <div class="btn-row eye-row">
                            <button class="btn" aria-label="Create view"><svg><use href="#eyenew"/></svg></button>
                            <button class="btn off dim gap" aria-label="Rename view" disabled><svg><use href="#eyeeq"/></svg></button>
                            <button class="btn off dim" aria-label="Update view" disabled><svg><use href="#eyeref"/></svg></button>
                            <button class="btn off dim push" aria-label="Delete view" disabled><svg><use href="#eyedel"/></svg></button>
                            <button class="btn off dim" aria-label="Delete all views" disabled><svg><use href="#del"/></svg></button>
                        </div>
                    </section>
                    <section class="visibilities">
                        <h3>Visibilities</h3>
                        <div class="btn-row narrow">
                            <button class="btn" aria-label="By window"><svg><use href="#visbox"/></svg></button>
                            <button class="btn" aria-label="Hide selected"><svg><use href="#sdel"/></svg></button>
                            <button class="btn" aria-label="By lines"><svg><use href="#sline"/></svg></button>
                            <button class="btn" aria-label="By numbering"><svg><use href="#snum"/></svg></button>
                            <button class="btn gap" aria-label="Previous visibility"><svg><use href="#sundo"/></svg></button>
                            <button class="btn off dim" aria-label="Invert visibility" disabled><svg><use href="#sref"/></svg></button>
                            <button class="btn off dim gap" aria-label="Cancel visibility" disabled><svg><use href="#sx"/></svg></button>
                        </div>
                        <label class="check-row"><input type="checkbox" class="big-check"><span><u>V</u>isibilities:</span></label>
                        <ul class="tree">
                            <li>
                                <div class="row"><button class="exp open" aria-label="Collapse"></button><input type="checkbox" class="mixed" id="t1"><svg><use href="#folderopen"/></svg><label for="t1">User-defined</label></div>
                                <ul>
                                    <li>
                                        <div class="row"><button class="exp open" aria-label="Collapse"></button><input type="checkbox" id="t2" checked><svg><use href="#folderopen"/></svg><label for="t2">Frames</label></div>
                                        <ul>
                                            <li><div class="row leaf"><input type="checkbox" id="ta"><i class="swatch blue"></i><label for="ta">A</label></div></li>
                                            <li><div class="row leaf"><input type="checkbox" id="tb"><i class="swatch yellow"></i><label for="tb">B</label></div></li>
                                            <li><div class="row leaf"><input type="checkbox" id="tc"><i class="swatch red"></i><label for="tc" class="focused">C</label></div></li>
                                        </ul>
                                    </li>
                                </ul>
                            </li>
                            <li>
                                <div class="row"><button class="exp open" aria-label="Collapse"></button><input type="checkbox" class="mixed" id="t3"><svg><use href="#folderopen"/></svg><label for="t3">Generated</label></div>
                                <ul>
                                    <li><div class="row"><button class="exp" aria-label="Expand"></button><input type="checkbox" id="g1"><svg><use href="#folder"/></svg><label for="g1">Lines by Type</label></div></li>
                                    <li><div class="row"><button class="exp" aria-label="Expand"></button><input type="checkbox" id="g2"><svg><use href="#folder"/></svg><label for="g2">Members by Cross-Section</label></div></li>
                                    <li><div class="row"><button class="exp" aria-label="Expand"></button><input type="checkbox" id="g3"><svg><use href="#folder"/></svg><label for="g3">Members by Eccentricity</label></div></li>
                                    <li><div class="row"><button class="exp" aria-label="Expand"></button><input type="checkbox" id="g4"><svg><use href="#folder"/></svg><label for="g4">Members by Hinge</label></div></li>
                                    <li><div class="row"><button class="exp" aria-label="Expand"></button><input type="checkbox" id="g5"><svg><use href="#folder"/></svg><label for="g5">Members by Material</label></div></li>
                                    <li><div class="row"><button class="exp" aria-label="Expand"></button><input type="checkbox" id="g6"><svg><use href="#folder"/></svg><label for="g6">Members by Type</label></div></li>
                                    <li><div class="row"><button class="exp" aria-label="Expand"></button><input type="checkbox" id="g7"><svg><use href="#folder"/></svg><label for="g7">Nodes with Support</label></div></li>
                                    <li><div class="row"><button class="exp" aria-label="Expand"></button><input type="checkbox" id="g8"><svg><use href="#folder"/></svg><label for="g8">Sets of Members</label></div></li>
                                </ul>
                            </li>
                        </ul>
                        <div class="btn-row narrow">
                            <button class="btn" aria-label="New visibility"><svg><use href="#snew"/></svg></button>
                            <button class="btn gap" aria-label="Add to visibility"><svg><use href="#splus"/></svg></button>
                            <button class="btn" aria-label="Remove from visibility"><svg><use href="#sminus"/></svg></button>
                            <div class="marked">
                                <button class="btn hover" aria-describedby="tip" aria-label="Redefine visibility"><svg><use href="#seq"/></svg></button>
                                <div class="tooltip" id="tip" role="tooltip">Redefine Selected User-Defined Visibility by Selected Objects</div>
                            </div>
                            <button class="btn off dim gap" aria-label="Update visibility" disabled><svg><use href="#sref"/></svg></button>
                            <button class="btn pressed gap" aria-label="Union"><svg><use href="#inter"/></svg></button>
                            <button class="btn off" aria-label="Intersection" disabled><svg><use href="#inter"/></svg></button>
                            <button class="btn off" aria-label="Difference" disabled><svg><use href="#inter"/></svg></button>
                        </div>
                        <label class="check-row"><input type="checkbox" class="big-check"><span><u>A</u>dd new objects in:</span></label>
                        <select class="target" aria-label="Target visibility" disabled></select>
                    </section>
                </div>
            </div>
            <div class="nav-tabs">
                <a href="#"><svg><use href="#tdata"/></svg>Data</a>
                <a href="#"><svg><use href="#tdisp"/></svg>Display</a>
                <a href="#" class="active"><svg><use href="#tview"/></svg>Views</a>
            </div>
        </aside>

        <div class="content">
            <!-- 3D model -->
            <div class="viewport">
                <svg viewBox="323 125 1595 666" role="img" aria-label="Hall structure">
                    <defs>
                        <g id="backcol"><path d="M725 313h9v172h-4v-3h-5z" fill="#7474ff"/><path d="M729 316v168" stroke="#5a5ae6" stroke-width="2"/></g>
                        <g id="frontcol"><path d="M923 465h10v170h-5v-3h-5z" fill="#7070fc"/><path d="M926.500 465v168" stroke="#5454e2" stroke-width="3"/></g>
                        <g id="rafter">
                            <path d="M731 310l99 19-3 9-96-14z" fill="#5a5af0"/>
                            <path d="M731 310l99 19M731 324l96 14" stroke="#777" stroke-dasharray="1 1.500" fill="none"/>
                            <path d="M746 313v11M776 319v10M826 330v8" stroke="#999" stroke-dasharray="1 1.500"/>
                            <path d="M826 338l4-10 5 3 92 124 1 10h-6z" fill="#5c5cf0"/>
                            <path d="M830 329l96 128" stroke="#4040ac" stroke-width="5"/>
                            <path d="M832 327l96 128M826 338l96 128" stroke="#555" stroke-dasharray="1 2" fill="none"/>
                        </g>
                        <g id="gable">
                            <path d="M594 325l99 19-3 8-96-20z" fill="#5a5af0"/>
                            <path d="M594 325l99 19" stroke="#666" stroke-dasharray="1 1.500"/>
                            <path d="M689 351l4-7 3 2 95 127-4 5z" fill="#5252e0"/>
                            <path d="M694 347l95 126" stroke="#4040ac" stroke-width="3"/>
                            <path d="M690 352l95 124M695 345l95 127" stroke="#555" stroke-dasharray="1 2"/>
                        </g>
                        <g id="posts">
                            <path d="M638 342h7v192h-7zM688 350h7v221h-7zM738 415h7v194h-7z" fill="#6464f2"/>
                            <path d="M639 342v192M689 350v221M739 415v194" stroke="#8888e8"/>
                            <use href="#foot" x="641.500" y="535"/><use href="#foot" x="691.500" y="572"/><use href="#foot" x="741.500" y="610"/>
                            <path d="M639 546h5v7h-5zM689 583h5v7h-5zM739 621h5v7h-5z" fill="#3ee83e"/>
                            <g fill="#fff" stroke="#1a8c7c" stroke-width="1.500"><circle cx="641.500" cy="341.500" r="2.500"/><circle cx="691.500" cy="351" r="2.500"/><circle cx="741" cy="416" r="2.500"/></g>
                        </g>
                        <g id="foot"><path d="M-4 4h8l5 5-4 3-11 0-3-3z" fill="#3ddf3d"/><path d="M-4 4h8l3 3H-7z" fill="#7cff7c"/><circle cx="0" cy="2" r="3.500" fill="#30f030"/></g>
                        <g id="redfoot"><path d="M-4 4h8l5 5-4 3-11 0-3-3z" fill="#e04444"/><path d="M-4 4h8l3 3H-7z" fill="#f47070"/><circle cx="0" cy="2" r="3.500" fill="#f83030"/></g>
                        <g id="bracing" fill="none" stroke="#8080ea" stroke-dasharray="5 1">
                            <path d="M693 351l184 50M741 413l86-75M741 413l179 49M793 476l84-74M594 327l183 -3M642 341l88-26M692 349l37-26M642 337h185M594 327l37-5"/>
                        </g>
                        <g id="wall" fill="none" stroke="#7878e6" stroke-dasharray="5 1">
                            <path d="M795 483l131 149M923 470L796 640"/>
                        </g>
                        <g id="backwall" fill="none" stroke="#7878e6" stroke-dasharray="5 1">
                            <path d="M595 332l132 150M597 490l92-120"/>
                        </g>
                    </defs>
                    <use href="#backwall"/>
                    <use href="#backwall" transform="translate(686 -67)"/>
                    <use href="#backcol" transform="translate(-137 13)"/>
                    <use href="#backcol"/>
                    <use href="#backcol" transform="translate(137 -14)"/>
                    <use href="#backcol" transform="translate(274 -27)"/>
                    <use href="#backcol" transform="translate(411 -40)"/>
                    <use href="#backcol" transform="translate(549 -54)"/>
                    <use href="#backcol" transform="translate(686 -67)"/>
                    <use href="#posts" transform="translate(823 -81)"/>
                    <use href="#bracing"/>
                    <use href="#bracing" transform="translate(686 -67)"/>
                    <!-- purlins -->
                    <g stroke="#7a7af4" stroke-width="3">
                        <path d="M594 328l822-81M642 341l823-81M692 348l823-82M741 413l824-81M790 478l823-81"/>
                    </g>
                    <g stroke="#33338c" stroke-width="1">
                        <path d="M692 348l823-82M741 412l824-81M790 477l823-81"/>
                    </g>
                    <g>
                        <use href="#foot" x="592.500" y="499"/><use href="#foot" x="729.500" y="486"/><use href="#redfoot" x="866.500" y="472"/>
                        <use href="#foot" x="1004" y="458"/><use href="#foot" x="1141" y="445"/><use href="#foot" x="1278.500" y="431"/><use href="#foot" x="1415.500" y="418"/>
                        <use href="#foot" x="791" y="649"/><use href="#foot" x="928" y="635"/><use href="#redfoot" x="1065" y="622"/>
                        <use href="#foot" x="1202.500" y="608"/><use href="#foot" x="1340" y="594"/><use href="#foot" x="1477" y="581"/><use href="#foot" x="1614" y="567"/>
                    </g>
                    <use href="#gable" transform="translate(823 -81)"/>
                    <use href="#rafter"/>
                    <use href="#rafter" transform="translate(274 -27)"/>
                    <use href="#rafter" transform="translate(411 -40)"/>
                    <use href="#rafter" transform="translate(549 -54)"/>
                    <use href="#gable"/>
                    <use href="#posts"/>
                    <use href="#frontcol" transform="translate(-137 13)"/>
                    <use href="#frontcol"/>
                    <use href="#frontcol" transform="translate(274 -27)"/>
                    <use href="#frontcol" transform="translate(411 -40)"/>
                    <use href="#frontcol" transform="translate(549 -54)"/>
                    <use href="#frontcol" transform="translate(686 -67)"/>
                    <use href="#wall"/>
                    <use href="#wall" transform="translate(686 -67)"/>
                    <g fill="#fff" stroke="#1a8c7c" stroke-width="1.500"><circle cx="1465" cy="260" r="2.500"/><circle cx="1515" cy="270" r="2.500"/><circle cx="1564.500" cy="335" r="2.500"/></g>
                    <!-- selected frame -->
                    <g transform="translate(137 -14)">
                        <use href="#rafter"/>
                        <use href="#frontcol"/>
                        <g fill="none" stroke="#f40c1c" stroke-width="2">
                            <path d="M725 313h9v172h-9zM729.500 314v170" />
                            <path d="M731 310l98 19-3 9-95-14zM736 311v13M748 313v11M753 314v11M778 319v9M783 320v9M825 329v9"/>
                            <path d="M826 338l4-9 5 3 92 124 1 10h-6z" />
                            <path d="M830 334l94 126" stroke-width="1"/>
                            <path d="M923 465h10v170h-10z"/>
                            <path d="M928.500 466v168" stroke-width="1"/>
                            <path d="M873 397l5-4 3 7-4 4zM904 438l5-4 3 7-4 4z" stroke-width="1"/>
                        </g>
                    </g>
                </svg>
            </div>

            <!-- Table panel -->
            <section class="tables">
                <div class="table-title">
                    <h2>1.1 Nodes</h2>
                    <button aria-label="Pin table"><svg><use href="#pin"/></svg></button>
                    <button aria-label="Close table"><svg><use href="#x"/></svg></button>
                </div>
                <div class="table-tools">
                    <button class="tool on" aria-label="Edit mode"><svg><use href="#gtri"/></svg></button>
                    <button class="tool" aria-label="Loads"><svg><use href="#gplus"/></svg></button>
                    <button class="tool" aria-label="Load table"><svg><use href="#gdown"/></svg></button>
                    <button class="tool faded" aria-label="Results"><svg><use href="#gramp"/></svg></button>
                    <button class="tool faded" aria-label="Diagram"><svg><use href="#gwave"/></svg></button>
                    <span class="sep"></span>
                    <button class="tool" aria-label="Previous table"><svg><use href="#gleft"/></svg></button>
                    <button class="tool" aria-label="Next table"><svg><use href="#gright"/></svg></button>
                    <span class="sep"></span>
                    <button class="tool on" aria-label="Sync selection"><svg><use href="#sync1"/></svg></button>
                    <button class="tool on" aria-label="Sync table"><svg><use href="#sync2"/></svg></button>
                    <button class="tool faded" aria-label="Refresh"><svg><use href="#refresh"/></svg></button>
                    <span class="sep"></span>
                    <button class="tool faded" aria-label="Add"><svg><use href="#cplus"/></svg></button>
                    <button class="tool faded" aria-label="Multiply"><svg><use href="#cmul"/></svg></button>
                    <button class="tool faded" aria-label="Divide"><svg><use href="#cdiv"/></svg></button>
                    <span class="sep"></span>
                    <button class="tool faded" aria-label="Clear"><svg><use href="#cx"/></svg></button>
                    <span class="sep"></span>
                    <button class="tool" aria-label="Delete row"><svg><use href="#rdel"/></svg></button>
                    <button class="tool" aria-label="Insert row"><svg><use href="#rin"/></svg></button>
                    <button class="tool" aria-label="Remove row"><svg><use href="#rout"/></svg></button>
                    <span class="sep"></span>
                    <button class="tool" aria-label="Highlight header"><svg><use href="#tyel"/></svg></button>
                    <button class="tool" aria-label="Filled rows"><svg><use href="#tblue"/></svg></button>
                    <span class="sep"></span>
                    <button class="tool" aria-label="Edit table"><svg><use href="#tedit"/></svg></button>
                    <span class="sep"></span>
                    <button class="tool" aria-label="Table properties"><svg><use href="#tprop"/></svg></button>
                    <button class="tool" aria-label="Settings"><svg><use href="#calc"/></svg></button>
                    <button class="tool" aria-label="Export to Excel"><svg><use href="#excel"/></svg></button>
                    <button class="tool" aria-label="Calculator"><svg><use href="#pocket"/></svg></button>
                    <span class="sep"></span>
                    <button class="tool" aria-label="Parameters"><svg><use href="#abeq"/></svg></button>
                    <button class="tool" aria-label="Formula"><svg><use href="#fx"/></svg></button>
                    <button class="tool" aria-label="Delete formula"><svg><use href="#fxdel"/></svg></button>
                    <span class="sep"></span>
                    <button class="tool" aria-label="Lock"><svg><use href="#lock"/></svg></button>
                </div>
                <div class="grid-area">
                    <table>
                        <colgroup><col class="c-no"><col class="c-a"><col class="c-b"><col class="c-c"><col class="c-n"><col class="c-n"><col class="c-n"><col></colgroup>
                        <thead>
                            <tr class="letters"><th rowspan="3" class="corner">Node<br>No.</th><th class="sel">A</th><th>B</th><th>C</th><th>D</th><th>E</th><th>F</th><th>G</th></tr>
                            <tr><th></th><th>Reference</th><th>Coordinate</th><th colspan="3">Node Coordinates</th><th></th></tr>
                            <tr class="units"><th>Node Type</th><th>Node</th><th>System</th><th>X [m]</th><th>Y [m]</th><th>Z [m]</th><th>Comment</th></tr>
                        </thead>
                        <tbody>
                            <tr><th class="sel">1</th><td class="current">Standard</td><td class="mid">0</td><td><u>C</u>artesian</td><td class="num">0.000</td><td class="num">0.000</td><td class="num">0.000</td><td></td></tr>
                            <tr><th>2</th><td>Standard</td><td class="mid">0</td><td><u>C</u>artesian</td><td class="num">0.000</td><td class="num">0.000</td><td class="num">-6.000</td><td></td></tr>
                        </tbody>
                    </table>
                    <div class="scrollbar">
                        <button aria-label="Scroll up"><svg viewBox="0 0 12 8"><path d="M1 7l5-5 5 5" fill="none" stroke="#555" stroke-width="2"/></svg></button>
                        <span class="thumb"></span>
                        <button aria-label="Scroll down"><svg viewBox="0 0 12 8"><path d="M1 1l5 5 5-5" fill="none" stroke="#555" stroke-width="2"/></svg></button>
                    </div>
                </div>
                <div class="sheet-tabs">
                    <a href="#" class="active">Nodes</a><a href="#">Lines</a><a href="#">Materials</a><a href="#">Surfaces</a><a href="#">Solids</a><a href="#">Openings</a><a href="#">Nodal Supports</a><a href="#">Line Supports</a><a href="#">Surface Supports</a><a href="#">Line Hinges</a><a href="#">Cross-Sections</a><a href="#">Member Hinges</a><a href="#">Member Eccentricities</a><a href="#">Member Divisions</a><a href="#">Members</a><a href="#">Member Elastic Foundations</a>
                    <div class="sheet-nav">
                        <button aria-label="First" disabled><svg viewBox="0 0 10 10"><path d="M1 1h2v8H1zM9 1v8L4 5z" fill="#999"/></svg></button>
                        <button aria-label="Previous" disabled><svg viewBox="0 0 10 10"><path d="M7 1v8L3 5z" fill="#999"/></svg></button>
                        <button aria-label="Next"><svg viewBox="0 0 10 10"><path d="M3 1v8l4-4z" fill="#000"/></svg></button>
                        <button aria-label="Last"><svg viewBox="0 0 10 10"><path d="M1 1v8l5-4zM7 1h2v8H7z" fill="#000"/></svg></button>
                    </div>
                </div>
            </section>
        </div>
    </main>

    <footer class="statusbar">
        <button>SNAP</button>
        <button class="raised">GRID</button>
        <button class="wide">CARTES</button>
        <button>OSNAP</button>
        <button>GLINES</button>
        <button>DXF</button>
        <span class="cell c1"></span><span class="cell c2"></span><span class="cell c3"></span><span class="cell c3"></span><span class="cell c3"></span>
    </footer>

    <!-- Step markers -->
    <svg class="steps" width="1920" height="1030" viewBox="0 0 1920 1030">
        <g fill="none" stroke="#c00000" stroke-width="3">
            <path d="M61 569h65v20H61z" stroke-width="2"/>
            <path class="shade" d="M918 331L146 575"/>
            <path class="shade" d="M87 597l39 246"/>
        </g>
        <g fill="#c00000" class="shade">
            <path d="M131 580l15-13 5 16z"/>
            <path d="M129 857l-10-14 15-2z"/>
        </g>
        <g class="shade" fill="#fff" stroke="#c00000" stroke-width="2">
            <circle cx="945" cy="360" r="24"/>
            <circle cx="197" cy="598" r="24"/>
            <circle cx="167" cy="832" r="24"/>
        </g>
        <g class="digits">
            <text x="945" y="369">1</text>
            <text x="196" y="608">2</text>
            <text x="165" y="841">3</text>
        </g>
    </svg>
</body>
</html>
```
FILE: styles.css
```css
* {
    box-sizing: border-box;
}

body {
    margin: 0;
    min-height: 100vh;
    display: flex;
    flex-direction: column;
    position: relative;
    background-color: #d0d4dd;
    font-family: "Open Sans", "Noto Sans", sans-serif;
    font-size: 14px;
    color: #000;
}

h1, h2, h3, p, ul {
    margin: 0;
    padding: 0;
    font-weight: normal;
}

button {
    padding: 0;
    border: none;
    background: none;
    font: inherit;
    color: inherit;
    cursor: pointer;
}

a {
    color: inherit;
    text-decoration: none;
}

.sprite {
    display: none;
}

.tiny {
    font: 8px "Liberation Serif", serif;
}

.axis {
    font: bold 12px "Liberation Serif", serif;
}

.formula {
    font: italic 16px "Liberation Serif", serif;
}

.formula.small {
    font-size: 11px;
    font-weight: bold;
}

.gray {
    fill: #77777c;
}

/* Title bar and menu */
.titlebar {
    display: flex;
    align-items: center;
    height: 29px;
    padding: 0 3px 0 2px;
    background-color: #fff;
}

.app-icon {
    width: 19px;
    height: 20px;
    margin-right: 6px;
}

.titlebar h1 {
    font-size: 14px;
}

.window-buttons {
    margin-left: auto;
    display: flex;
}

.window-buttons button {
    width: 58px;
    height: 28px;
}

.window-buttons svg {
    width: 12px;
    height: 12px;
}

.menubar {
    display: flex;
    align-items: center;
    gap: 15px;
    height: 30px;
    padding-left: 10px;
    font-size: 13px;
    color: #444a55;
}

.doc-icon {
    width: 20px;
    height: 17px;
    margin-right: -4px;
}

.mdi-buttons {
    margin-left: auto;
    display: flex;
    padding: 4px 2px 0 0;
}

.mdi-buttons button {
    width: 21px;
    height: 16px;
}

.mdi-buttons svg {
    width: 10px;
    height: 10px;
}

/* Toolbars */
.toolbar-row {
    display: flex;
    gap: 2px;
    height: 32px;
}

.toolbar {
    display: flex;
    align-items: center;
    padding: 0 1px 0 9px;
    border-bottom: 1px solid #a4a9b4;
    border-radius: 0 4px 2px 0;
    background: linear-gradient(#ebeff8, #e2e7f1 50%, #cfd3dd);
    position: relative;
}

.toolbar::before {
    content: "";
    position: absolute;
    left: 4px;
    top: 8px;
    height: 16px;
    border-left: 2px dotted #9299a6;
}

.tool {
    width: 28px;
    height: 28px;
    display: flex;
    align-items: center;
    justify-content: center;
    flex: none;
}

.tool svg {
    width: 20px;
    height: 20px;
}

.tool.on {
    border: 1px solid #c8a878;
    border-radius: 2px;
    background: linear-gradient(#fbc88a, #fdb050 45%, #ffe9a0);
}

.faded svg {
    opacity: 0.5;
}

.sep {
    flex: none;
    width: 2px;
    height: 18px;
    margin: 0 3px;
    background: linear-gradient(90deg, #a9aeb9 50%, #fff 50%);
}

.drop {
    width: 15px;
    height: 24px;
    display: flex;
    align-items: center;
    justify-content: center;
}

.drop::after {
    content: "";
    border: 4px solid transparent;
    border-top: 5px solid #777;
    border-bottom: none;
}

.load-case {
    width: 216px;
    height: 22px;
    margin: 0 2px;
    padding: 0 2px;
    appearance: none;
    border: 1px solid #fff;
    border-radius: 0;
    background: linear-gradient(#777, #777) right 6px center / 7px 1px no-repeat, linear-gradient(#777, #777) right 7px top 11px / 5px 1px no-repeat, linear-gradient(#777, #777) right 8px top 12px / 3px 1px no-repeat, linear-gradient(#dde1e9, #dde1e9) right / 18px 100% no-repeat, #fff;
    font: 14px "Open Sans", sans-serif;
    color: #000;
}

/* Workspace */
.workspace {
    flex: 1;
    display: grid;
    grid-template-columns: 317px minmax(0, 1fr);
    gap: 5px;
}

.navigator {
    display: flex;
    flex-direction: column;
    border-right: 1px solid #a4a9b4;
}

.nav-title {
    display: flex;
    align-items: center;
    height: 30px;
    padding: 0 4px;
    gap: 6px;
    border-bottom: 1px solid #a4a9b4;
    background-color: #e9eef7;
    color: #4a4f58;
}

.nav-title h2 {
    flex: 1;
    font-size: 14px;
    line-height: 26px;
}

.nav-title svg, .table-title svg {
    display: block;
    width: 12px;
    height: 12px;
    color: #757880;
}

.nav-frame {
    flex: 1;
    display: flex;
    padding: 3px 3px 3px 4px;
    border-left: 1px solid #a4a9b4;
    border-bottom: 1px solid #a4a9b4;
    background-color: #e9eef7;
}

.nav-body {
    flex: 1;
    min-width: 0;
    display: flex;
    flex-direction: column;
    gap: 6px;
    border-top: 1px solid #777;
    background-color: #fbfaf2;
}

.views, .visibilities {
    border-right: 1px solid #a9a9ee;
    border-bottom: 1px solid #a9a9ee;
    background-color: #f7f7f7;
    display: flex;
    flex-direction: column;
}

.btn-row {
    display: flex;
    gap: 6px;
    padding: 6px 4px 0;
}

.view-row {
    overflow: hidden;
}

.btn {
    width: 34px;
    height: 26px;
    flex: none;
    display: flex;
    align-items: center;
    justify-content: center;
    border: 1px solid #adadad;
    background-color: #e1e1e1;
}

.btn svg {
    width: 20px;
    height: 20px;
}

.btn.off {
    border-color: #bfbfbf;
    background-color: #ccc;
}

.btn.dim svg {
    filter: grayscale(1);
    opacity: 0.45;
}

.gap {
    margin-left: 6px;
}

.push {
    margin-left: auto;
}

.narrow .btn {
    width: 29px;
}

.narrow .gap {
    margin-left: 5px;
}

.btn.hover {
    border-color: #0078d7;
    background-color: #e5f1fb;
}

.btn.pressed {
    border-color: #005499;
    background-color: #cce4f7;
}

.marked {
    position: relative;
    outline: 2px solid #c00000;
    outline-offset: 3px;
}

.tooltip {
    position: absolute;
    left: 12px;
    top: 34px;
    z-index: 3;
    padding: 0 12px 0 6px;
    border: 1px solid #767676;
    background-color: #fff;
    box-shadow: 3px 3px 3px rgba(0, 0, 0, 0.4);
    color: #575757;
    font: 14px "Open Sans", sans-serif;
    line-height: 23px;
    white-space: nowrap;
}

.views-label {
    padding: 16px 4px 7px;
    font: 14px "Liberation Sans", Arial, sans-serif;
    line-height: 17px;
}

.views-list {
    height: 133px;
    border: 1px solid #828790;
    border-top-color: #8888b8;
    background-color: #fbfaf2;
}

.eye-row {
    padding: 4px 4px 4px 3px;
}

.visibilities {
    flex: 1;
    border-top: 1px solid #999;
    font: 13px "DejaVu Sans Condensed", "DejaVu Sans", sans-serif;
}

.visibilities h3 {
    padding-left: 3px;
    background-color: #d9e5ff;
    color: #000070;
    font: 14px "Liberation Sans", Arial, sans-serif;
    line-height: 19px;
}

.check-row {
    display: flex;
    align-items: center;
    gap: 3px;
    height: 16px;
    margin: 17px 4px 7px;
}

input[type="checkbox"] {
    appearance: none;
    width: 13px;
    height: 13px;
    margin: 0;
    flex: none;
    border: 1px solid #444;
    background: linear-gradient(135deg, #fff, #ccd3de);
}

input.big-check {
    width: 16px;
    height: 16px;
    border-color: #333;
    background: #fff;
}

input.mixed {
    background: linear-gradient(#999, #999) center / 7px 7px no-repeat, #e4e8ee;
}

input[type="checkbox"]:checked::after {
    content: "";
    display: block;
    width: 4px;
    height: 7px;
    margin: 0 0 0 4px;
    border: solid #000;
    border-width: 0 2px 2px 0;
    transform: rotate(42deg);
}

.target {
    appearance: none;
    height: 24px;
    margin: 0 5px 5px 4px;
    border: 1px solid #bfbfbf;
    border-radius: 0;
    background: linear-gradient(-45deg, transparent 46%, #999 46% 54%, transparent 54%) right 8px center / 5px 5px no-repeat, linear-gradient(45deg, transparent 46%, #999 46% 54%, transparent 54%) right 13px center / 5px 5px no-repeat, #ccc;
}

/* Visibility tree */
.tree {
    flex: 1;
    padding: 1px 0 0 7px;
    border: 1px solid #828790;
    background-color: #fbfaf2;
    list-style: none;
}

.tree ul {
    padding-left: 19px;
    list-style: none;
}

.tree li {
    position: relative;
}

.tree li::before {
    content: "";
    position: absolute;
    left: 5px;
    top: -4px;
    height: 13px;
    border-left: 1px dotted #777;
}

.tree li:not(:last-child)::before {
    height: auto;
    bottom: -9px;
}

.tree > li:first-child::before {
    top: 9px;
}

.tree > li:last-child::before {
    display: none;
}

.row {
    display: flex;
    align-items: center;
    height: 18px;
    position: relative;
}

.row::before {
    content: "";
    position: absolute;
    left: 6px;
    width: 10px;
    border-top: 1px dotted #777;
}

.row svg {
    width: 16px;
    height: 14px;
    margin: 0 2px 0 3px;
}

.row.leaf {
    padding-left: 18px;
}

.row label {
    padding: 0 2px;
    line-height: 16px;
}

.row .focused {
    border: 1px dotted #333;
    padding: 0 1px;
    line-height: 14px;
    background-color: #ececec;
}

.exp {
    position: relative;
    width: 11px;
    height: 11px;
    margin-right: 7px;
    border: 1px solid #999;
    background: linear-gradient(#3c5ca8, #3c5ca8) center / 7px 1px no-repeat, linear-gradient(#3c5ca8, #3c5ca8) center / 1px 7px no-repeat, #fff;
}

.exp.open {
    background: linear-gradient(#3c5ca8, #3c5ca8) center / 7px 1px no-repeat, #fff;
}

.swatch {
    width: 11px;
    height: 11px;
    margin: 0 3px 0 7px;
    border: 1px solid #000;
}

.swatch.blue { background-color: #6699ff; }
.swatch.yellow { background-color: #f9c400; }
.swatch.red { background-color: #b87070; }

.nav-tabs {
    display: flex;
    gap: 5px;
    height: 30px;
    padding: 0 2px 3px;
    font-size: 13px;
    color: #4a4f58;
}

.nav-tabs a {
    display: flex;
    align-items: center;
    gap: 2px;
    padding: 1px 3px 0;
}

.nav-tabs .active {
    border: 1px solid #b8dce0;
    border-top: none;
    border-radius: 0 0 3px 3px;
    background-color: #eef1f7;
}

.nav-tabs svg {
    width: 16px;
    height: 16px;
}

/* Main content */
.content {
    min-width: 0;
    display: flex;
    flex-direction: column;
    gap: 6px;
    padding-right: 1px;
}

.viewport {
    flex: 1;
    min-height: 0;
    position: relative;
    border: 1px solid #e0e0e0;
    border-top: 2px solid #666;
    border-left: 1px solid #666;
    background-color: #fff;
}

.viewport > svg {
    position: absolute;
    width: 100%;
    height: 100%;
}

.tables {
    height: 205px;
    display: flex;
    flex-direction: column;
    background-color: #f0f0f0;
    font: 14px "Liberation Sans", Arial, sans-serif;
}

.table-title {
    display: flex;
    align-items: center;
    height: 28px;
    gap: 7px;
    padding: 0 5px 0 4px;
    border-top: 1px solid #eef1f7;
    background-color: #b9c0ca;
    color: #4a4f58;
}

.table-title h2 {
    flex: 1;
    font: 13px "Open Sans", sans-serif;
}

.table-tools {
    display: flex;
    align-items: center;
    height: 31px;
    padding-left: 8px;
    background: linear-gradient(#ebeff8, #e2e7f1 50%, #cfd3dd);
}

.grid-area {
    display: flex;
    height: 105px;
    padding: 3px 0 0 1px;
    border-top: 1px solid #666;
    border-bottom: 2px solid #777;
}

table {
    flex: 1;
    align-self: flex-start;
    table-layout: fixed;
    border-collapse: collapse;
    border: 1px solid #999;
}

.c-no { width: 54px; }
.c-a { width: 100px; }
.c-b { width: 86px; }
.c-c { width: 108px; }
.c-n { width: 93px; }

th, td {
    height: 19px;
    padding: 0 4px;
    border: 1px solid #999;
    font-weight: normal;
    line-height: 16px;
    white-space: nowrap;
}

thead th {
    border-top: none;
    border-bottom: none;
}

.letters th {
    height: 17px;
    line-height: 15px;
    border: 1px solid #666;
    background-color: #e1e1e1;
}

.letters .corner {
    border-bottom: 1px solid #666;
    line-height: 16px;
}

.units th {
    height: 20px;
}

tbody th {
    background-color: #e1e1e1;
}

th.sel, .letters .sel {
    background-color: #0078d7;
    color: #fff;
}

td {
    background-color: #fff;
}

.current {
    outline: 1px dotted #000;
    outline-offset: -2px;
}

.mid {
    text-align: center;
}

.num {
    text-align: right;
}

.scrollbar {
    width: 23px;
    display: flex;
    flex-direction: column;
    align-items: center;
}

.scrollbar button {
    width: 18px;
    height: 19px;
}

.scrollbar svg {
    width: 11px;
    height: 8px;
}

.thumb {
    width: 19px;
    height: 21px;
    margin-bottom: auto;
    background-color: #cdcdcd;
}

.sheet-tabs {
    display: flex;
    align-items: flex-start;
    white-space: nowrap;
    font-size: 13px;
}

.sheet-tabs a {
    height: 18px;
    padding: 0 6px;
    border: solid #666;
    border-width: 0 1px 1px 0;
    border-radius: 0 0 4px 4px;
    background-color: #e1e1e1;
    line-height: 18px;
}

.sheet-tabs .active {
    background-color: #f0f0f0;
}

.sheet-nav {
    margin-left: auto;
    display: flex;
}

.sheet-nav button {
    width: 18px;
    height: 18px;
    border: 1px solid #999;
    border-color: #fff #777 #777 #fff;
}

.sheet-nav svg {
    display: block;
    width: 10px;
    height: 10px;
    margin: auto;
}

/* Status bar */
.statusbar {
    display: flex;
    justify-content: flex-end;
    gap: 2px;
    height: 27px;
    padding-top: 1px;
    border-top: 1px solid #a4a9b4;
    background: linear-gradient(#dde0e8, #a9aeb8 35%, #b8bcc6);
    font: 13px "Liberation Sans", Arial, sans-serif;
    color: #33363c;
}

.statusbar button {
    padding: 0 2px 4px;
    border: 1px solid #fff;
    border-top: 2px solid #111;
    border-left: 2px solid #111;
}

.statusbar .raised {
    padding: 0 4px 6px 2px;
    border: 1px solid #999;
    border-top-color: #ddd;
    border-left-color: #ddd;
}

.statusbar .wide {
    padding-left: 6px;
}

.cell {
    border-left: 1px solid #999;
}

.c1 { width: 187px; }
.c2 { width: 86px; }
.c3 { width: 72px; }

/* Numbered step markers over the window */
.steps {
    position: absolute;
    left: 0;
    top: 0;
    pointer-events: none;
}

.shade {
    filter: drop-shadow(4px 5px 3px rgba(0, 0, 0, 0.45));
}

.digits {
    fill: #c00000;
    font: 30px "DejaVu Sans", sans-serif;
    text-anchor: middle;
}
```
